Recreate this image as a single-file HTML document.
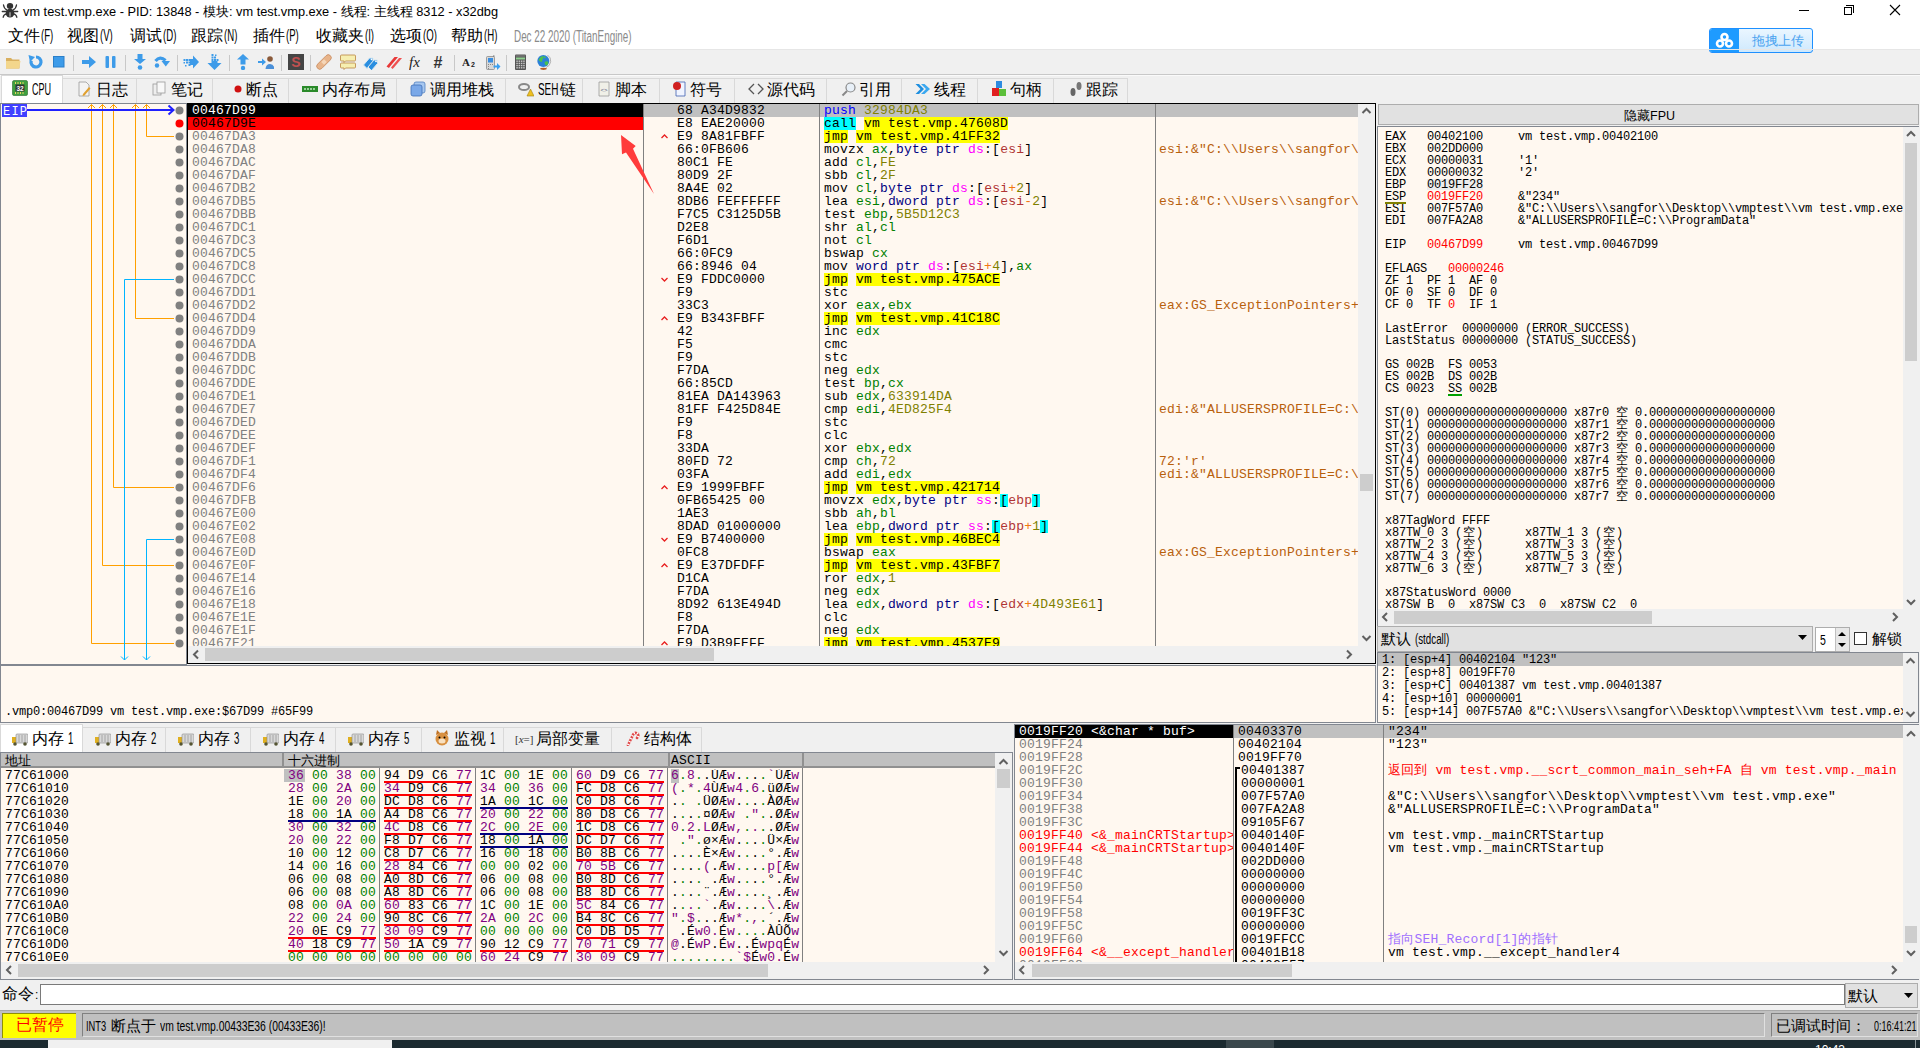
<!DOCTYPE html><html><head><meta charset="utf-8"><style>
*{margin:0;padding:0;box-sizing:border-box}
html,body{width:1920px;height:1048px;overflow:hidden;background:#f0f0f0;font-family:"Liberation Sans",sans-serif}
.a{position:absolute}
.m{position:absolute;font-family:"Liberation Mono",monospace;white-space:pre}
.m13{font-size:13px;letter-spacing:0.2px;line-height:13px;height:13px}
.m12{font-size:12px;letter-spacing:-0.2px;line-height:12px;height:12px}
.m12b{font-size:12px;letter-spacing:-0.2px;line-height:13px;height:13px}
.ui{position:absolute;white-space:pre;font-family:"Liberation Sans",sans-serif;color:#000}
.sb{position:absolute;background:#f0f0f0}
.th{position:absolute;background:#cdcdcd}
</style></head><body>

<div class="a" style="left:0;top:0;width:1920px;height:50px;background:#fff"></div>
<svg class="a" style="left:0;top:0" width="20" height="20" viewBox="0 0 20 20">
<g fill="#333"><ellipse cx="10" cy="6" rx="3.2" ry="2.9"/><ellipse cx="10" cy="13.2" rx="4.3" ry="4.4"/></g>
<rect x="9.3" y="11" width="1.4" height="5.6" fill="#aaa"/>
<g stroke="#333" stroke-width="1.3" fill="none" stroke-linecap="round"><path d="M3.5 5 Q4 8.5 6.8 9.8 M16.5 5 Q16 8.5 13.2 9.8 M2.3 11.5 H17.7 M3.2 17.3 Q3.5 14.5 6.5 13.8 M16.8 17.3 Q16.5 14.5 13.5 13.8"/></g></svg>
<div class="ui" style="left:23px;top:4px;font-size:12.8px;line-height:16px;color:#000">vm test.vmp.exe - PID: 13848 - 模块: vm test.vmp.exe - 线程: 主线程 8312 - x32dbg</div>
<div class="a" style="left:1799px;top:10px;width:10px;height:1px;background:#000"></div>
<div class="a" style="left:1844px;top:7px;width:8px;height:8px;border:1px solid #000"></div>
<div class="a" style="left:1846px;top:5px;width:8px;height:8px;border-top:1px solid #000;border-right:1px solid #000"></div>
<svg class="a" style="left:1889px;top:4px" width="12" height="12"><path d="M1 1 L11 11 M11 1 L1 11" stroke="#000" stroke-width="1.1"/></svg>
<div class="ui" style="left:8px;top:26px;font-size:16px;line-height:19px">文件<span style="display:inline-block;transform:scaleX(0.6);transform-origin:0 50%;margin-left:1px">(F)</span></div>
<div class="ui" style="left:67px;top:26px;font-size:16px;line-height:19px">视图<span style="display:inline-block;transform:scaleX(0.6);transform-origin:0 50%;margin-left:1px">(V)</span></div>
<div class="ui" style="left:130px;top:26px;font-size:16px;line-height:19px">调试<span style="display:inline-block;transform:scaleX(0.6);transform-origin:0 50%;margin-left:1px">(D)</span></div>
<div class="ui" style="left:191px;top:26px;font-size:16px;line-height:19px">跟踪<span style="display:inline-block;transform:scaleX(0.6);transform-origin:0 50%;margin-left:1px">(N)</span></div>
<div class="ui" style="left:253px;top:26px;font-size:16px;line-height:19px">插件<span style="display:inline-block;transform:scaleX(0.6);transform-origin:0 50%;margin-left:1px">(P)</span></div>
<div class="ui" style="left:316px;top:26px;font-size:16px;line-height:19px">收藏夹<span style="display:inline-block;transform:scaleX(0.6);transform-origin:0 50%;margin-left:1px">(I)</span></div>
<div class="ui" style="left:390px;top:26px;font-size:16px;line-height:19px">选项<span style="display:inline-block;transform:scaleX(0.6);transform-origin:0 50%;margin-left:1px">(O)</span></div>
<div class="ui" style="left:451px;top:26px;font-size:16px;line-height:19px">帮助<span style="display:inline-block;transform:scaleX(0.6);transform-origin:0 50%;margin-left:1px">(H)</span></div>
<div class="ui" style="left:514px;top:27px;font-size:16px;line-height:19px;color:#8a8a8a;transform:scaleX(0.617);transform-origin:0 0">Dec 22 2020 (TitanEngine)</div>
<div class="a" style="left:1709px;top:28px;width:104px;height:25px;border:1px solid #1e90ff;border-radius:3px;background:linear-gradient(#eaf6ff,#cfe9fd);overflow:hidden"><div class="a" style="left:-1px;top:-1px;width:30px;height:25px;background:#1e9bff;border-radius:3px 0 0 3px"></div><svg class="a" style="left:5px;top:3px" width="19" height="17" viewBox="0 0 19 17"><g fill="none" stroke="#fff" stroke-width="2.6"><circle cx="9.5" cy="5" r="3"/><circle cx="5" cy="11.5" r="3"/><circle cx="14" cy="11.5" r="3"/></g></svg><div class="ui" style="left:42px;top:3px;font-size:13px;line-height:17px;color:#4aa3f0">拖拽上传</div></div>
<div class="a" style="left:0;top:49px;width:1920px;height:1px;background:#e6e6e6"></div>
<div class="a" style="left:0;top:74px;width:1920px;height:1px;background:#c8c8c8"></div>
<div class="a" style="left:0;top:75px;width:1920px;height:1px;background:#fafafa"></div>
<div class="a" style="left:73px;top:55px;width:1px;height:16px;background:#c8c8c8"></div>
<div class="a" style="left:125px;top:55px;width:1px;height:16px;background:#c8c8c8"></div>
<div class="a" style="left:177px;top:55px;width:1px;height:16px;background:#c8c8c8"></div>
<div class="a" style="left:229px;top:55px;width:1px;height:16px;background:#c8c8c8"></div>
<div class="a" style="left:281px;top:55px;width:1px;height:16px;background:#c8c8c8"></div>
<div class="a" style="left:310px;top:55px;width:1px;height:16px;background:#c8c8c8"></div>
<div class="a" style="left:454px;top:55px;width:1px;height:16px;background:#c8c8c8"></div>
<div class="a" style="left:506px;top:55px;width:1px;height:16px;background:#c8c8c8"></div>
<svg class="a" style="left:5px;top:54px" width="16" height="16" viewBox="0 0 16 16"><path d="M1 4 h5 l1.5 1.5 h7 v9 h-13.5z" fill="#d9b060"/><path d="M1 7 h14.5 l-1.5 7.5 h-13z" fill="#f3d68c"/></svg>
<svg class="a" style="left:28px;top:54px" width="16" height="16" viewBox="0 0 16 16"><path d="M8 3 a5 5 0 1 1 -4.8 3.6" fill="none" stroke="#3d9be9" stroke-width="3.2"/><path d="M0.5 1 l6.5 2 l-5 5z" fill="#3d9be9"/></svg>
<svg class="a" style="left:50px;top:54px" width="16" height="16" viewBox="0 0 16 16"><rect x="3.5" y="2.5" width="10.5" height="10.5" fill="#3d9be9" stroke="#2a7fc9"/></svg>
<svg class="a" style="left:81px;top:54px" width="16" height="16" viewBox="0 0 16 16"><path d="M1 6 h7 v-4 l7 6 l-7 6 v-4 h-7z" fill="#3d9be9"/></svg>
<svg class="a" style="left:103px;top:54px" width="16" height="16" viewBox="0 0 16 16"><rect x="2.5" y="2" width="3.5" height="12" rx="1" fill="#3d9be9"/><rect x="9" y="2" width="3.5" height="12" rx="1" fill="#3d9be9"/></svg>
<svg class="a" style="left:132px;top:54px" width="16" height="16" viewBox="0 0 16 16"><path d="M5.5 0 h5 v5 h3.5 l-6 5 l-6 -5 h3.5z" fill="#3d9be9"/><circle cx="8" cy="13.5" r="2.3" fill="#3d9be9"/></svg>
<svg class="a" style="left:154px;top:54px" width="16" height="16" viewBox="0 0 16 16"><path d="M1.5 7 Q6 1.5 11.5 6.5" fill="none" stroke="#3d9be9" stroke-width="3.2"/><path d="M7.5 7 H16 L11.8 12.5z" fill="#3d9be9"/><circle cx="3" cy="11.5" r="2.2" fill="#3d9be9"/></svg>
<svg class="a" style="left:183px;top:54px" width="16" height="16" viewBox="0 0 16 16"><path d="M7 5 h3 v-3.5 l6 6.5 l-6 6.5 v-3.5 h-3z" fill="#3d9be9"/><g fill="#3d9be9"><rect x="0.5" y="5" width="2" height="2"/><rect x="3" y="5" width="2" height="2"/><rect x="5.5" y="5" width="2" height="2"/><rect x="3" y="7.5" width="2" height="2"/><rect x="5.5" y="7.5" width="2" height="2"/><rect x="0.5" y="8" width="1.5" height="1.5"/><rect x="5.5" y="10" width="2" height="2"/><rect x="2" y="11" width="1.5" height="1.5"/></g></svg>
<svg class="a" style="left:207px;top:54px" width="16" height="16" viewBox="0 0 16 16"><path d="M4.5 7 v2 h-4 l7 7 l7 -7 h-4 v-2z" fill="#3d9be9"/><g fill="#3d9be9"><rect x="4.5" y="0" width="2" height="2"/><rect x="4.5" y="2.5" width="2" height="2"/><rect x="7" y="2.5" width="2" height="2"/><rect x="4.5" y="5" width="2" height="2"/><rect x="7" y="5" width="2" height="2"/><rect x="9.5" y="5" width="2" height="2"/><rect x="8" y="0.5" width="1.5" height="1.5"/></g></svg>
<svg class="a" style="left:235px;top:54px" width="16" height="16" viewBox="0 0 16 16"><path d="M8 0 l6 5.5 h-3.5 v5 h-5 v-5 h-3.5z" fill="#3d9be9"/><circle cx="8" cy="14" r="2.2" fill="#3d9be9"/></svg>
<svg class="a" style="left:258px;top:54px" width="16" height="16" viewBox="0 0 16 16"><path d="M0 7 h4 v-2.5 l4 3.5 l-4 3.5 v-2.5 h-4z" fill="#3d9be9"/><circle cx="12" cy="5" r="2.8" fill="#8a5a3a"/><path d="M7.5 15 q0.5 -5 4.5 -5 q4 0 4.5 5z" fill="#4a90d9"/></svg>
<svg class="a" style="left:288px;top:54px" width="16" height="16" viewBox="0 0 16 16"><rect x="0" y="0" width="16" height="16" fill="#454545"/><text x="8" y="13" font-size="14" font-weight="bold" fill="#c05050" text-anchor="middle" font-family="Liberation Sans">S</text></svg>
<svg class="a" style="left:316px;top:54px" width="16" height="16" viewBox="0 0 16 16"><rect x="-1" y="5" width="18" height="6" rx="3" transform="rotate(-45 8 8)" fill="#e8b48a" stroke="#c98d62" stroke-width="0.8"/><rect x="6" y="6" width="4" height="4" transform="rotate(-45 8 8)" fill="#f5d6b8"/></svg>
<svg class="a" style="left:340px;top:54px" width="16" height="16" viewBox="0 0 16 16"><path d="M1.5 1 h13 a1 1 0 0 1 1 1 v4 a1 1 0 0 1 -1 1 h-9 l-1.5 1.5 v-1.5 h-2.5 a1 1 0 0 1 -1 -1 v-4 a1 1 0 0 1 1 -1z" fill="#f6eeb0" stroke="#c09050" stroke-width="0.9"/><path d="M1.5 9 h13 a1 1 0 0 1 1 1 v3 a1 1 0 0 1 -1 1 h-9 l-1.5 1.5 v-1.5 h-2.5 a1 1 0 0 1 -1 -1 v-3 a1 1 0 0 1 1 -1z" fill="#f6eeb0" stroke="#c09050" stroke-width="0.9"/></svg>
<svg class="a" style="left:363px;top:54px" width="16" height="16" viewBox="0 0 16 16"><path d="M0.5 11 l6 -7 h3.5 v3.5 l-6 7z" fill="#2a8ee0" stroke="#d8e8f0" stroke-width="1"/><path d="M5 13 l6 -7 h3.5 v3.5 l-6 7z" fill="#2a8ee0" stroke="#d8e8f0" stroke-width="1"/><circle cx="8.5" cy="5.3" r="0.9" fill="#fff"/><circle cx="13" cy="7.3" r="0.9" fill="#fff"/></svg>
<svg class="a" style="left:386px;top:54px" width="16" height="16" viewBox="0 0 16 16"><path d="M0.5 12.5 l8 -9.5 h3.5 l-8 9.5 l-1 1.5z" fill="#e83838"/><path d="M5 13.5 l8 -9.5 h3 l-8 9.5 l-1.5 1.5z" fill="#f05050"/></svg>
<svg class="a" style="left:409px;top:54px" width="16" height="16" viewBox="0 0 16 16"><text x="0" y="12.5" font-size="15" font-style="italic" font-family="Liberation Serif" fill="#222">fx</text></svg>
<svg class="a" style="left:433px;top:54px" width="16" height="16" viewBox="0 0 16 16"><text x="0.5" y="13.5" font-size="16" font-weight="bold" font-family="Liberation Sans" fill="#333">#</text></svg>
<svg class="a" style="left:462px;top:54px" width="16" height="16" viewBox="0 0 16 16"><text x="0" y="12" font-size="11" font-weight="bold" font-family="Liberation Serif" fill="#222">A</text><text x="9" y="13" font-size="7" font-weight="bold" font-family="Liberation Sans" fill="#222">2</text></svg>
<svg class="a" style="left:485px;top:54px" width="16" height="16" viewBox="0 0 16 16"><rect x="1.5" y="2.5" width="8" height="13" rx="1" fill="#d8d8d8" stroke="#8a8a8a" stroke-width="0.8"/><rect x="3" y="4" width="5" height="4.5" fill="#3a8ee0"/><g fill="#888"><rect x="3" y="10" width="1" height="1"/><rect x="5" y="10" width="1" height="1"/><rect x="7" y="10" width="1" height="1"/><rect x="3" y="12" width="1" height="1"/><rect x="3" y="14" width="1" height="1"/></g><rect x="8.6" y="1" width="0.6" height="2" fill="#555"/><path d="M8.5 11.5 h3.5 v-2.5 l3.5 3.5 l-3.5 3.5 v-2.5 h-3.5z" fill="#3aa0f0"/></svg>
<svg class="a" style="left:514px;top:54px" width="16" height="16" viewBox="0 0 16 16"><rect x="1" y="0.5" width="11" height="15.5" rx="1" fill="#555"/><rect x="2" y="1.5" width="9" height="1" fill="#888"/><rect x="2" y="3.5" width="9" height="2" fill="#8fd08f"/><g fill="#c8c8c8"><rect x="2.3" y="6.5" width="1.5" height="1.4"/><rect x="4.6" y="6.5" width="1.5" height="1.4"/><rect x="6.9" y="6.5" width="1.5" height="1.4"/><rect x="9.2" y="6.5" width="1.5" height="1.4"/><rect x="2.3" y="8.7" width="1.5" height="1.4"/><rect x="4.6" y="8.7" width="1.5" height="1.4"/><rect x="6.9" y="8.7" width="1.5" height="1.4"/><rect x="9.2" y="8.7" width="1.5" height="1.4"/><rect x="2.3" y="10.9" width="1.5" height="1.4"/><rect x="4.6" y="10.9" width="1.5" height="1.4"/><rect x="6.9" y="10.9" width="1.5" height="1.4"/><rect x="9.2" y="10.9" width="1.5" height="1.4"/><rect x="2.3" y="13.1" width="1.5" height="1.4"/><rect x="4.6" y="13.1" width="1.5" height="1.4"/><rect x="6.9" y="13.1" width="1.5" height="1.4"/><rect x="9.2" y="13.1" width="1.5" height="1.4"/></g></svg>
<svg class="a" style="left:536px;top:54px" width="16" height="16" viewBox="0 0 16 16"><circle cx="7.3" cy="7" r="6" fill="#2a80d8"/><path d="M2.5 6 q1.5 -3.5 4 -4 q1.5 1 0.5 3 q-1 1 -1 3 q-2 0 -3.5 -2z M8.5 8 q2.5 -1.5 4 0.5 q-0.5 2.5 -2.5 3 q-1.5 -1.5 -1.5 -3.5z M7 2 q2 0 3 1.5 l-1.5 1z" fill="#4cc04c"/><path d="M11.5 1 a7 7 0 0 1 -1.5 12.5" fill="none" stroke="#aaa" stroke-width="0.9"/><ellipse cx="7.5" cy="14.8" rx="3.3" ry="1.1" fill="#b8602a"/></svg>
<div class="a" style="left:1px;top:75px;width:62px;height:29px;background:#fff;border:1px solid #d9d9d9;border-bottom:none"></div>
<svg class="a" style="left:12px;top:80px" width="16" height="16" viewBox="0 0 16 16"><rect x="0.5" y="0.5" width="15" height="15" rx="1.5" fill="#3fa03f" stroke="#2a6a2a" stroke-width="0.6"/><g fill="#e8d060"><rect x="3" y="2" width="1" height="2"/><rect x="5.5" y="2" width="1" height="2"/><rect x="8" y="2" width="1" height="2"/><rect x="10.5" y="2" width="1" height="2"/><rect x="3" y="12" width="1" height="2"/><rect x="5.5" y="12" width="1" height="2"/><rect x="8" y="12" width="1" height="2"/><rect x="10.5" y="12" width="1" height="2"/></g><rect x="3.5" y="4.5" width="9" height="7" fill="#333"/><text x="8" y="10.6" font-size="6.5" font-weight="bold" fill="#fff" text-anchor="middle" font-family="Liberation Sans">32</text></svg>
<div class="ui" style="left:32px;top:81px;font-size:16.5px;line-height:17px;transform:scaleX(0.55);transform-origin:0 0">CPU</div>
<div class="a" style="left:63px;top:78px;width:74px;height:25px;background:#f0f0f0;border:1px solid #d9d9d9;border-bottom:none;border-left:none"></div>
<svg class="a" style="left:76px;top:81px" width="16" height="16" viewBox="0 0 16 16"><path d="M3 1 h7 l3 3 v11 h-10z" fill="#f4f4f4" stroke="#999" stroke-width="0.8"/><path d="M7 13 l6 -7 l1.5 1.5 l-6 7 l-2 0.5z" fill="#e0a030"/></svg>
<div class="ui" style="left:96px;top:80px;font-size:16px;line-height:19px">日志</div>
<div class="a" style="left:137px;top:78px;width:76px;height:25px;background:#f0f0f0;border:1px solid #d9d9d9;border-bottom:none;border-left:none"></div>
<svg class="a" style="left:151px;top:81px" width="16" height="16" viewBox="0 0 16 16"><rect x="2" y="3" width="8" height="11" fill="#eee" stroke="#999" stroke-width="0.8"/><rect x="6" y="1" width="8" height="11" fill="#f8f8f8" stroke="#999" stroke-width="0.8"/></svg>
<div class="ui" style="left:171px;top:80px;font-size:16px;line-height:19px">笔记</div>
<div class="a" style="left:213px;top:78px;width:76px;height:25px;background:#f0f0f0;border:1px solid #d9d9d9;border-bottom:none;border-left:none"></div>
<svg class="a" style="left:230px;top:81px" width="16" height="16" viewBox="0 0 16 16"><circle cx="8" cy="8" r="3.5" fill="#d01010"/></svg>
<div class="ui" style="left:246px;top:80px;font-size:16px;line-height:19px">断点</div>
<div class="a" style="left:289px;top:78px;width:108px;height:25px;background:#f0f0f0;border:1px solid #d9d9d9;border-bottom:none;border-left:none"></div>
<svg class="a" style="left:302px;top:81px" width="16" height="16" viewBox="0 0 16 16"><rect x="0" y="5" width="16" height="6" fill="#2a8a2a"/><g fill="#9ad09a"><rect x="2" y="7" width="2" height="2"/><rect x="5" y="7" width="2" height="2"/><rect x="8" y="7" width="2" height="2"/><rect x="11" y="7" width="2" height="2"/></g></svg>
<div class="ui" style="left:322px;top:80px;font-size:16px;line-height:19px">内存布局</div>
<div class="a" style="left:397px;top:78px;width:109px;height:25px;background:#f0f0f0;border:1px solid #d9d9d9;border-bottom:none;border-left:none"></div>
<svg class="a" style="left:410px;top:81px" width="16" height="16" viewBox="0 0 16 16"><rect x="4" y="1" width="11" height="11" rx="2" fill="#a8c8f0" stroke="#5080c0" stroke-width="0.8"/><rect x="1" y="4" width="11" height="11" rx="2" fill="#7aa8e8" stroke="#4070b8" stroke-width="0.8"/></svg>
<div class="ui" style="left:430px;top:80px;font-size:16px;line-height:19px">调用堆栈</div>
<div class="a" style="left:506px;top:78px;width:77px;height:25px;background:#f0f0f0;border:1px solid #d9d9d9;border-bottom:none;border-left:none"></div>
<svg class="a" style="left:518px;top:81px" width="16" height="16" viewBox="0 0 16 16"><ellipse cx="6" cy="6" rx="5" ry="3" fill="none" stroke="#888" stroke-width="2"/><path d="M9 15 l3.5 -7 l3.5 7z" fill="#f0c020" stroke="#a08010" stroke-width="0.6"/></svg>
<div class="ui" style="left:538px;top:80px;font-size:16px;line-height:19px"><span style="display:inline-block;transform:scaleX(0.62);transform-origin:0 50%;margin-right:-11px">SEH</span>链</div>
<div class="a" style="left:583px;top:78px;width:77px;height:25px;background:#f0f0f0;border:1px solid #d9d9d9;border-bottom:none;border-left:none"></div>
<svg class="a" style="left:596px;top:81px" width="16" height="16" viewBox="0 0 16 16"><path d="M3 1 h10 v14 h-10z" fill="#f0f0e8" stroke="#999" stroke-width="0.8"/><text x="8" y="11" font-size="6" fill="#557" text-anchor="middle" font-family="Liberation Sans">&lt;&gt;</text></svg>
<div class="ui" style="left:615px;top:80px;font-size:16px;line-height:19px">脚本</div>
<div class="a" style="left:660px;top:78px;width:75px;height:25px;background:#f0f0f0;border:1px solid #d9d9d9;border-bottom:none;border-left:none"></div>
<svg class="a" style="left:672px;top:81px" width="16" height="16" viewBox="0 0 16 16"><path d="M4 1 h9 v14 h-9z" fill="#f0f4ff" stroke="#4060b0" stroke-width="0.8"/><circle cx="5" cy="5" r="4" fill="#d02020"/></svg>
<div class="ui" style="left:690px;top:80px;font-size:16px;line-height:19px">符号</div>
<div class="a" style="left:735px;top:78px;width:92px;height:25px;background:#f0f0f0;border:1px solid #d9d9d9;border-bottom:none;border-left:none"></div>
<svg class="a" style="left:748px;top:81px" width="16" height="16" viewBox="0 0 16 16"><path d="M6 3 l-5 5 l5 5 M10 3 l5 5 l-5 5" fill="none" stroke="#555" stroke-width="1.3"/></svg>
<div class="ui" style="left:767px;top:80px;font-size:16px;line-height:19px">源代码</div>
<div class="a" style="left:827px;top:78px;width:75px;height:25px;background:#f0f0f0;border:1px solid #d9d9d9;border-bottom:none;border-left:none"></div>
<svg class="a" style="left:841px;top:81px" width="16" height="16" viewBox="0 0 16 16"><circle cx="9.5" cy="6.5" r="4.5" fill="#e8f0f8" stroke="#888" stroke-width="1.2"/><path d="M6 10 l-4.5 4.5" stroke="#888" stroke-width="2"/></svg>
<div class="ui" style="left:859px;top:80px;font-size:16px;line-height:19px">引用</div>
<div class="a" style="left:902px;top:78px;width:76px;height:25px;background:#f0f0f0;border:1px solid #d9d9d9;border-bottom:none;border-left:none"></div>
<svg class="a" style="left:915px;top:81px" width="16" height="16" viewBox="0 0 16 16"><path d="M0.5 3 h3.5 l5 5 l-5 5 h-3.5 l5 -5z" fill="#1e8fe0"/><path d="M6 3 h3.5 l5.5 5 l-5.5 5 h-3.5 l5 -5z" fill="#3aa8f0"/></svg>
<div class="ui" style="left:934px;top:80px;font-size:16px;line-height:19px">线程</div>
<div class="a" style="left:978px;top:78px;width:76px;height:25px;background:#f0f0f0;border:1px solid #d9d9d9;border-bottom:none;border-left:none"></div>
<svg class="a" style="left:991px;top:81px" width="16" height="16" viewBox="0 0 16 16"><rect x="5" y="0" width="6" height="7" fill="#2d8be0"/><rect x="1" y="7" width="7" height="8" fill="#e02020"/><rect x="8" y="8" width="7" height="7" fill="#5cbf3a"/></svg>
<div class="ui" style="left:1010px;top:80px;font-size:16px;line-height:19px">句柄</div>
<div class="a" style="left:1054px;top:78px;width:74px;height:25px;background:#f0f0f0;border:1px solid #d9d9d9;border-bottom:none;border-left:none"></div>
<svg class="a" style="left:1068px;top:81px" width="16" height="16" viewBox="0 0 16 16"><ellipse cx="5" cy="11" rx="2.5" ry="4" fill="#666"/><ellipse cx="11" cy="5" rx="2.5" ry="4" fill="#777"/></svg>
<div class="ui" style="left:1086px;top:80px;font-size:16px;line-height:19px">跟踪</div>
<div class="a" style="left:0;top:103px;width:187px;height:562px;background:#fff8f0;border-left:1px solid #828790;border-top:1px solid #828790;border-right:1px solid #828790;border-bottom:1px solid #828790"></div>
<div class="a" style="left:187px;top:103px;width:1189px;height:561px;background:#fff8f0;border:1px solid #000"></div>
<div class="a" style="left:188px;top:104px;width:1170px;height:542px;overflow:hidden">
<div class="a" style="left:455px;top:0;width:715px;height:13px;background:#c0c0c0"></div>
<div class="a" style="left:0;top:0;width:455px;height:13px;background:#000"></div>
<div class="a" style="left:0;top:13px;width:455px;height:13px;background:#ff0000"></div>
<div class="a" style="left:455px;top:0;width:1px;height:542px;background:#808080"></div>
<div class="a" style="left:631px;top:0;width:1px;height:542px;background:#808080"></div>
<div class="a" style="left:967px;top:0;width:1px;height:542px;background:#808080"></div>
<div class="m m13" style="left:4px;top:0px;color:#ffffff">00467D99</div>
<div class="m m13" style="left:489px;top:0px;color:#000">68 A34D9832</div>
<div class="m m13" style="left:636px;top:0px"><span style="color:#0000ff">push</span><span style="color:#000000"> </span><span style="color:#808000">32984DA3</span></div>
<div class="m m13" style="left:4px;top:13px;color:#000000">00467D9E</div>
<div class="m m13" style="left:489px;top:13px;color:#000">E8 EAE20000</div>
<div class="m m13" style="left:636px;top:13px"><span style="color:#000000;background:#00ffff;display:inline-block;height:13px;line-height:13px;vertical-align:top">call</span><span style="color:#000000"> </span><span style="color:#000000;background:#ffff00;display:inline-block;height:13px;line-height:13px;vertical-align:top">vm test.vmp.47608D</span></div>
<div class="m m13" style="left:4px;top:26px;color:#808080">00467DA3</div>
<div class="m m13" style="left:489px;top:26px;color:#000">E9 8A81FBFF</div>
<div class="m m13" style="left:636px;top:26px"><span style="color:#000000;background:#ffff00;display:inline-block;height:13px;line-height:13px;vertical-align:top">jmp</span><span style="color:#000000"> </span><span style="color:#000000;background:#ffff00;display:inline-block;height:13px;line-height:13px;vertical-align:top">vm test.vmp.41FF32</span></div>
<div class="m m13" style="left:4px;top:39px;color:#808080">00467DA8</div>
<div class="m m13" style="left:489px;top:39px;color:#000">66:0FB606</div>
<div class="m m13" style="left:636px;top:39px"><span style="color:#000000">movzx </span><span style="color:#008000">ax</span><span style="color:#000000">,</span><span style="color:#000080">byte ptr</span><span style="color:#000000"> </span><span style="color:#ff00ff">ds</span><span style="color:#000000">:</span><span style="color:#000000">[</span><span style="color:#b03434">esi</span><span style="color:#000000">]</span></div>
<div class="m m13" style="left:971px;top:39px;color:#b8600c;width:199px;overflow:hidden">esi:&amp;"C:\\Users\\sangfor\</div>
<div class="m m13" style="left:4px;top:52px;color:#808080">00467DAC</div>
<div class="m m13" style="left:489px;top:52px;color:#000">80C1 FE</div>
<div class="m m13" style="left:636px;top:52px"><span style="color:#000000">add </span><span style="color:#008000">cl</span><span style="color:#000000">,</span><span style="color:#808000">FE</span></div>
<div class="m m13" style="left:4px;top:65px;color:#808080">00467DAF</div>
<div class="m m13" style="left:489px;top:65px;color:#000">80D9 2F</div>
<div class="m m13" style="left:636px;top:65px"><span style="color:#000000">sbb </span><span style="color:#008000">cl</span><span style="color:#000000">,</span><span style="color:#808000">2F</span></div>
<div class="m m13" style="left:4px;top:78px;color:#808080">00467DB2</div>
<div class="m m13" style="left:489px;top:78px;color:#000">8A4E 02</div>
<div class="m m13" style="left:636px;top:78px"><span style="color:#000000">mov </span><span style="color:#008000">cl</span><span style="color:#000000">,</span><span style="color:#000080">byte ptr</span><span style="color:#000000"> </span><span style="color:#ff00ff">ds</span><span style="color:#000000">:</span><span style="color:#000000">[</span><span style="color:#b03434">esi</span><span style="color:#f27711">+</span><span style="color:#808000">2</span><span style="color:#000000">]</span></div>
<div class="m m13" style="left:4px;top:91px;color:#808080">00467DB5</div>
<div class="m m13" style="left:489px;top:91px;color:#000">8DB6 FEFFFFFF</div>
<div class="m m13" style="left:636px;top:91px"><span style="color:#000000">lea </span><span style="color:#008000">esi</span><span style="color:#000000">,</span><span style="color:#000080">dword ptr</span><span style="color:#000000"> </span><span style="color:#ff00ff">ds</span><span style="color:#000000">:</span><span style="color:#000000">[</span><span style="color:#b03434">esi</span><span style="color:#f27711">-</span><span style="color:#808000">2</span><span style="color:#000000">]</span></div>
<div class="m m13" style="left:971px;top:91px;color:#b8600c;width:199px;overflow:hidden">esi:&amp;"C:\\Users\\sangfor\</div>
<div class="m m13" style="left:4px;top:104px;color:#808080">00467DBB</div>
<div class="m m13" style="left:489px;top:104px;color:#000">F7C5 C3125D5B</div>
<div class="m m13" style="left:636px;top:104px"><span style="color:#000000">test </span><span style="color:#008000">ebp</span><span style="color:#000000">,</span><span style="color:#808000">5B5D12C3</span></div>
<div class="m m13" style="left:4px;top:117px;color:#808080">00467DC1</div>
<div class="m m13" style="left:489px;top:117px;color:#000">D2E8</div>
<div class="m m13" style="left:636px;top:117px"><span style="color:#000000">shr </span><span style="color:#008000">al</span><span style="color:#000000">,</span><span style="color:#008000">cl</span></div>
<div class="m m13" style="left:4px;top:130px;color:#808080">00467DC3</div>
<div class="m m13" style="left:489px;top:130px;color:#000">F6D1</div>
<div class="m m13" style="left:636px;top:130px"><span style="color:#000000">not </span><span style="color:#008000">cl</span></div>
<div class="m m13" style="left:4px;top:143px;color:#808080">00467DC5</div>
<div class="m m13" style="left:489px;top:143px;color:#000">66:0FC9</div>
<div class="m m13" style="left:636px;top:143px"><span style="color:#000000">bswap </span><span style="color:#008000">cx</span></div>
<div class="m m13" style="left:4px;top:156px;color:#808080">00467DC8</div>
<div class="m m13" style="left:489px;top:156px;color:#000">66:8946 04</div>
<div class="m m13" style="left:636px;top:156px"><span style="color:#000000">mov </span><span style="color:#000080">word ptr</span><span style="color:#000000"> </span><span style="color:#ff00ff">ds</span><span style="color:#000000">:</span><span style="color:#000000">[</span><span style="color:#b03434">esi</span><span style="color:#f27711">+</span><span style="color:#808000">4</span><span style="color:#000000">]</span><span style="color:#000000">,</span><span style="color:#008000">ax</span></div>
<div class="m m13" style="left:4px;top:169px;color:#808080">00467DCC</div>
<div class="m m13" style="left:489px;top:169px;color:#000">E9 FDDC0000</div>
<div class="m m13" style="left:636px;top:169px"><span style="color:#000000;background:#ffff00;display:inline-block;height:13px;line-height:13px;vertical-align:top">jmp</span><span style="color:#000000"> </span><span style="color:#000000;background:#ffff00;display:inline-block;height:13px;line-height:13px;vertical-align:top">vm test.vmp.475ACE</span></div>
<div class="m m13" style="left:4px;top:182px;color:#808080">00467DD1</div>
<div class="m m13" style="left:489px;top:182px;color:#000">F9</div>
<div class="m m13" style="left:636px;top:182px"><span style="color:#000000">stc</span></div>
<div class="m m13" style="left:4px;top:195px;color:#808080">00467DD2</div>
<div class="m m13" style="left:489px;top:195px;color:#000">33C3</div>
<div class="m m13" style="left:636px;top:195px"><span style="color:#000000">xor </span><span style="color:#008000">eax</span><span style="color:#000000">,</span><span style="color:#008000">ebx</span></div>
<div class="m m13" style="left:971px;top:195px;color:#b8600c;width:199px;overflow:hidden">eax:GS_ExceptionPointers+</div>
<div class="m m13" style="left:4px;top:208px;color:#808080">00467DD4</div>
<div class="m m13" style="left:489px;top:208px;color:#000">E9 B343FBFF</div>
<div class="m m13" style="left:636px;top:208px"><span style="color:#000000;background:#ffff00;display:inline-block;height:13px;line-height:13px;vertical-align:top">jmp</span><span style="color:#000000"> </span><span style="color:#000000;background:#ffff00;display:inline-block;height:13px;line-height:13px;vertical-align:top">vm test.vmp.41C18C</span></div>
<div class="m m13" style="left:4px;top:221px;color:#808080">00467DD9</div>
<div class="m m13" style="left:489px;top:221px;color:#000">42</div>
<div class="m m13" style="left:636px;top:221px"><span style="color:#000000">inc </span><span style="color:#008000">edx</span></div>
<div class="m m13" style="left:4px;top:234px;color:#808080">00467DDA</div>
<div class="m m13" style="left:489px;top:234px;color:#000">F5</div>
<div class="m m13" style="left:636px;top:234px"><span style="color:#000000">cmc</span></div>
<div class="m m13" style="left:4px;top:247px;color:#808080">00467DDB</div>
<div class="m m13" style="left:489px;top:247px;color:#000">F9</div>
<div class="m m13" style="left:636px;top:247px"><span style="color:#000000">stc</span></div>
<div class="m m13" style="left:4px;top:260px;color:#808080">00467DDC</div>
<div class="m m13" style="left:489px;top:260px;color:#000">F7DA</div>
<div class="m m13" style="left:636px;top:260px"><span style="color:#000000">neg </span><span style="color:#008000">edx</span></div>
<div class="m m13" style="left:4px;top:273px;color:#808080">00467DDE</div>
<div class="m m13" style="left:489px;top:273px;color:#000">66:85CD</div>
<div class="m m13" style="left:636px;top:273px"><span style="color:#000000">test </span><span style="color:#008000">bp</span><span style="color:#000000">,</span><span style="color:#008000">cx</span></div>
<div class="m m13" style="left:4px;top:286px;color:#808080">00467DE1</div>
<div class="m m13" style="left:489px;top:286px;color:#000">81EA DA143963</div>
<div class="m m13" style="left:636px;top:286px"><span style="color:#000000">sub </span><span style="color:#008000">edx</span><span style="color:#000000">,</span><span style="color:#808000">633914DA</span></div>
<div class="m m13" style="left:4px;top:299px;color:#808080">00467DE7</div>
<div class="m m13" style="left:489px;top:299px;color:#000">81FF F425D84E</div>
<div class="m m13" style="left:636px;top:299px"><span style="color:#000000">cmp </span><span style="color:#008000">edi</span><span style="color:#000000">,</span><span style="color:#808000">4ED825F4</span></div>
<div class="m m13" style="left:971px;top:299px;color:#b8600c;width:199px;overflow:hidden">edi:&amp;"ALLUSERSPROFILE=C:\</div>
<div class="m m13" style="left:4px;top:312px;color:#808080">00467DED</div>
<div class="m m13" style="left:489px;top:312px;color:#000">F9</div>
<div class="m m13" style="left:636px;top:312px"><span style="color:#000000">stc</span></div>
<div class="m m13" style="left:4px;top:325px;color:#808080">00467DEE</div>
<div class="m m13" style="left:489px;top:325px;color:#000">F8</div>
<div class="m m13" style="left:636px;top:325px"><span style="color:#000000">clc</span></div>
<div class="m m13" style="left:4px;top:338px;color:#808080">00467DEF</div>
<div class="m m13" style="left:489px;top:338px;color:#000">33DA</div>
<div class="m m13" style="left:636px;top:338px"><span style="color:#000000">xor </span><span style="color:#008000">ebx</span><span style="color:#000000">,</span><span style="color:#008000">edx</span></div>
<div class="m m13" style="left:4px;top:351px;color:#808080">00467DF1</div>
<div class="m m13" style="left:489px;top:351px;color:#000">80FD 72</div>
<div class="m m13" style="left:636px;top:351px"><span style="color:#000000">cmp </span><span style="color:#008000">ch</span><span style="color:#000000">,</span><span style="color:#808000">72</span></div>
<div class="m m13" style="left:971px;top:351px;color:#b8600c;width:199px;overflow:hidden">72:'r'</div>
<div class="m m13" style="left:4px;top:364px;color:#808080">00467DF4</div>
<div class="m m13" style="left:489px;top:364px;color:#000">03FA</div>
<div class="m m13" style="left:636px;top:364px"><span style="color:#000000">add </span><span style="color:#008000">edi</span><span style="color:#000000">,</span><span style="color:#008000">edx</span></div>
<div class="m m13" style="left:971px;top:364px;color:#b8600c;width:199px;overflow:hidden">edi:&amp;"ALLUSERSPROFILE=C:\</div>
<div class="m m13" style="left:4px;top:377px;color:#808080">00467DF6</div>
<div class="m m13" style="left:489px;top:377px;color:#000">E9 1999FBFF</div>
<div class="m m13" style="left:636px;top:377px"><span style="color:#000000;background:#ffff00;display:inline-block;height:13px;line-height:13px;vertical-align:top">jmp</span><span style="color:#000000"> </span><span style="color:#000000;background:#ffff00;display:inline-block;height:13px;line-height:13px;vertical-align:top">vm test.vmp.421714</span></div>
<div class="m m13" style="left:4px;top:390px;color:#808080">00467DFB</div>
<div class="m m13" style="left:489px;top:390px;color:#000">0FB65425 00</div>
<div class="m m13" style="left:636px;top:390px"><span style="color:#000000">movzx </span><span style="color:#008000">edx</span><span style="color:#000000">,</span><span style="color:#000080">byte ptr</span><span style="color:#000000"> </span><span style="color:#ff00ff">ss</span><span style="color:#000000">:</span><span style="color:#000000;background:#00ffff;display:inline-block;height:13px;line-height:13px;vertical-align:top">[</span><span style="color:#b03434">ebp</span><span style="color:#000000;background:#00ffff;display:inline-block;height:13px;line-height:13px;vertical-align:top">]</span></div>
<div class="m m13" style="left:4px;top:403px;color:#808080">00467E00</div>
<div class="m m13" style="left:489px;top:403px;color:#000">1AE3</div>
<div class="m m13" style="left:636px;top:403px"><span style="color:#000000">sbb </span><span style="color:#008000">ah</span><span style="color:#000000">,</span><span style="color:#008000">bl</span></div>
<div class="m m13" style="left:4px;top:416px;color:#808080">00467E02</div>
<div class="m m13" style="left:489px;top:416px;color:#000">8DAD 01000000</div>
<div class="m m13" style="left:636px;top:416px"><span style="color:#000000">lea </span><span style="color:#008000">ebp</span><span style="color:#000000">,</span><span style="color:#000080">dword ptr</span><span style="color:#000000"> </span><span style="color:#ff00ff">ss</span><span style="color:#000000">:</span><span style="color:#000000;background:#00ffff;display:inline-block;height:13px;line-height:13px;vertical-align:top">[</span><span style="color:#b03434">ebp</span><span style="color:#f27711">+</span><span style="color:#808000">1</span><span style="color:#000000;background:#00ffff;display:inline-block;height:13px;line-height:13px;vertical-align:top">]</span></div>
<div class="m m13" style="left:4px;top:429px;color:#808080">00467E08</div>
<div class="m m13" style="left:489px;top:429px;color:#000">E9 B7400000</div>
<div class="m m13" style="left:636px;top:429px"><span style="color:#000000;background:#ffff00;display:inline-block;height:13px;line-height:13px;vertical-align:top">jmp</span><span style="color:#000000"> </span><span style="color:#000000;background:#ffff00;display:inline-block;height:13px;line-height:13px;vertical-align:top">vm test.vmp.46BEC4</span></div>
<div class="m m13" style="left:4px;top:442px;color:#808080">00467E0D</div>
<div class="m m13" style="left:489px;top:442px;color:#000">0FC8</div>
<div class="m m13" style="left:636px;top:442px"><span style="color:#000000">bswap </span><span style="color:#008000">eax</span></div>
<div class="m m13" style="left:971px;top:442px;color:#b8600c;width:199px;overflow:hidden">eax:GS_ExceptionPointers+</div>
<div class="m m13" style="left:4px;top:455px;color:#808080">00467E0F</div>
<div class="m m13" style="left:489px;top:455px;color:#000">E9 E37DFDFF</div>
<div class="m m13" style="left:636px;top:455px"><span style="color:#000000;background:#ffff00;display:inline-block;height:13px;line-height:13px;vertical-align:top">jmp</span><span style="color:#000000"> </span><span style="color:#000000;background:#ffff00;display:inline-block;height:13px;line-height:13px;vertical-align:top">vm test.vmp.43FBF7</span></div>
<div class="m m13" style="left:4px;top:468px;color:#808080">00467E14</div>
<div class="m m13" style="left:489px;top:468px;color:#000">D1CA</div>
<div class="m m13" style="left:636px;top:468px"><span style="color:#000000">ror </span><span style="color:#008000">edx</span><span style="color:#000000">,</span><span style="color:#808000">1</span></div>
<div class="m m13" style="left:4px;top:481px;color:#808080">00467E16</div>
<div class="m m13" style="left:489px;top:481px;color:#000">F7DA</div>
<div class="m m13" style="left:636px;top:481px"><span style="color:#000000">neg </span><span style="color:#008000">edx</span></div>
<div class="m m13" style="left:4px;top:494px;color:#808080">00467E18</div>
<div class="m m13" style="left:489px;top:494px;color:#000">8D92 613E494D</div>
<div class="m m13" style="left:636px;top:494px"><span style="color:#000000">lea </span><span style="color:#008000">edx</span><span style="color:#000000">,</span><span style="color:#000080">dword ptr</span><span style="color:#000000"> </span><span style="color:#ff00ff">ds</span><span style="color:#000000">:</span><span style="color:#000000">[</span><span style="color:#b03434">edx</span><span style="color:#f27711">+</span><span style="color:#808000">4D493E61</span><span style="color:#000000">]</span></div>
<div class="m m13" style="left:4px;top:507px;color:#808080">00467E1E</div>
<div class="m m13" style="left:489px;top:507px;color:#000">F8</div>
<div class="m m13" style="left:636px;top:507px"><span style="color:#000000">clc</span></div>
<div class="m m13" style="left:4px;top:520px;color:#808080">00467E1F</div>
<div class="m m13" style="left:489px;top:520px;color:#000">F7DA</div>
<div class="m m13" style="left:636px;top:520px"><span style="color:#000000">neg </span><span style="color:#008000">edx</span></div>
<div class="m m13" style="left:4px;top:533px;color:#808080">00467E21</div>
<div class="m m13" style="left:489px;top:533px;color:#000">E9 D3B9FEFF</div>
<div class="m m13" style="left:636px;top:533px"><span style="color:#000000;background:#ffff00;display:inline-block;height:13px;line-height:13px;vertical-align:top">jmp</span><span style="color:#000000"> </span><span style="color:#000000;background:#ffff00;display:inline-block;height:13px;line-height:13px;vertical-align:top">vm test.vmp.4537E9</span></div>
</div>
<div class="sb" style="left:1358px;top:104px;width:17px;height:542px"></div>
<div class="th" style="left:1360px;top:474px;width:13px;height:17px"></div>
<div class="sb" style="left:188px;top:646px;width:1187px;height:17px"></div>
<div class="th" style="left:205px;top:648px;width:509px;height:13px"></div>
<svg class="a" style="left:0;top:0" width="190" height="670"><path d="M91.5 643.5 V104.5 M88.0 108 L91.5 104.5 L95.0 108" fill="none" stroke="#ffa000" stroke-width="1"/><path d="M91.5 643.5 H174" fill="none" stroke="#ffa000" stroke-width="1"/><path d="M102.5 565.5 V104.5 M99.0 108 L102.5 104.5 L106.0 108" fill="none" stroke="#ffa000" stroke-width="1"/><path d="M102.5 565.5 H174" fill="none" stroke="#ffa000" stroke-width="1"/><path d="M113.5 487.5 V104.5 M110.0 108 L113.5 104.5 L117.0 108" fill="none" stroke="#ffa000" stroke-width="1"/><path d="M113.5 487.5 H174" fill="none" stroke="#ffa000" stroke-width="1"/><path d="M135.5 318.5 V104.5 M132.0 108 L135.5 104.5 L139.0 108" fill="none" stroke="#ffa000" stroke-width="1"/><path d="M135.5 318.5 H174" fill="none" stroke="#ffa000" stroke-width="1"/><path d="M146.5 136.5 V104.5 M143.0 108 L146.5 104.5 L150.0 108" fill="none" stroke="#ffa000" stroke-width="1"/><path d="M146.5 136.5 H174" fill="none" stroke="#ffa000" stroke-width="1"/><path d="M174 279.5 H124.5 V660 M121.0 656.5 L124.5 660 L128.0 656.5" fill="none" stroke="#00b4ff" stroke-width="1"/><path d="M174 539.5 H146.5 V660 M143.0 656.5 L146.5 660 L150.0 656.5" fill="none" stroke="#00b4ff" stroke-width="1"/><rect x="2" y="104" width="25" height="13" fill="#4040ff"/><path d="M27 110 H173" stroke="#2020ff" stroke-width="2"/><path d="M168.5 105.5 L173.5 110 L168.5 114.5" fill="none" stroke="#2020ff" stroke-width="2"/><circle cx="179.5" cy="110.5" r="4" fill="#808080"/><circle cx="179.5" cy="123.5" r="4" fill="#ff0000"/><circle cx="179.5" cy="136.5" r="4" fill="#808080"/><circle cx="179.5" cy="149.5" r="4" fill="#808080"/><circle cx="179.5" cy="162.5" r="4" fill="#808080"/><circle cx="179.5" cy="175.5" r="4" fill="#808080"/><circle cx="179.5" cy="188.5" r="4" fill="#808080"/><circle cx="179.5" cy="201.5" r="4" fill="#808080"/><circle cx="179.5" cy="214.5" r="4" fill="#808080"/><circle cx="179.5" cy="227.5" r="4" fill="#808080"/><circle cx="179.5" cy="240.5" r="4" fill="#808080"/><circle cx="179.5" cy="253.5" r="4" fill="#808080"/><circle cx="179.5" cy="266.5" r="4" fill="#808080"/><circle cx="179.5" cy="279.5" r="4" fill="#808080"/><circle cx="179.5" cy="292.5" r="4" fill="#808080"/><circle cx="179.5" cy="305.5" r="4" fill="#808080"/><circle cx="179.5" cy="318.5" r="4" fill="#808080"/><circle cx="179.5" cy="331.5" r="4" fill="#808080"/><circle cx="179.5" cy="344.5" r="4" fill="#808080"/><circle cx="179.5" cy="357.5" r="4" fill="#808080"/><circle cx="179.5" cy="370.5" r="4" fill="#808080"/><circle cx="179.5" cy="383.5" r="4" fill="#808080"/><circle cx="179.5" cy="396.5" r="4" fill="#808080"/><circle cx="179.5" cy="409.5" r="4" fill="#808080"/><circle cx="179.5" cy="422.5" r="4" fill="#808080"/><circle cx="179.5" cy="435.5" r="4" fill="#808080"/><circle cx="179.5" cy="448.5" r="4" fill="#808080"/><circle cx="179.5" cy="461.5" r="4" fill="#808080"/><circle cx="179.5" cy="474.5" r="4" fill="#808080"/><circle cx="179.5" cy="487.5" r="4" fill="#808080"/><circle cx="179.5" cy="500.5" r="4" fill="#808080"/><circle cx="179.5" cy="513.5" r="4" fill="#808080"/><circle cx="179.5" cy="526.5" r="4" fill="#808080"/><circle cx="179.5" cy="539.5" r="4" fill="#808080"/><circle cx="179.5" cy="552.5" r="4" fill="#808080"/><circle cx="179.5" cy="565.5" r="4" fill="#808080"/><circle cx="179.5" cy="578.5" r="4" fill="#808080"/><circle cx="179.5" cy="591.5" r="4" fill="#808080"/><circle cx="179.5" cy="604.5" r="4" fill="#808080"/><circle cx="179.5" cy="617.5" r="4" fill="#808080"/><circle cx="179.5" cy="630.5" r="4" fill="#808080"/><circle cx="179.5" cy="643.5" r="4" fill="#808080"/></svg>
<div class="m m13" style="left:3px;top:106px;color:#fff;font-size:12px;letter-spacing:1.2px">EIP</div>
<div class="a" style="left:0;top:665px;width:1376px;height:58px;background:#fff8f0;border:1px solid #828790"></div>
<div class="m m12b" style="left:5px;top:706px;color:#000">.vmp0:00467D99 vm test.vmp.exe:$67D99 #65F99</div>
<div class="a" style="left:1378px;top:104px;width:541px;height:21px;background:#e1e1e1;border:1px solid #adadad"></div>
<div class="ui" style="left:1624px;top:107px;font-size:12.5px;line-height:18px">隐藏FPU</div>
<div class="a" style="left:1377px;top:126px;width:542px;height:500px;background:#fff8f0;border-left:1px solid #828790;border-top:1px solid #828790"></div>
<div class="sb" style="left:1903px;top:127px;width:16px;height:482px"></div>
<div class="th" style="left:1905px;top:143px;width:12px;height:218px"></div>
<div class="sb" style="left:1378px;top:609px;width:541px;height:17px"></div>
<div class="th" style="left:1394px;top:611px;width:258px;height:13px"></div>
<div class="a" style="left:1427px;top:179px;width:56px;height:11px;background:#ececec"></div>
<div class="m m12" style="left:1385px;top:131px;color:#000"><span style="color:#000">EAX   00402100     vm test.vmp.00402100</span></div>
<div class="m m12" style="left:1385px;top:143px;color:#000"><span style="color:#000">EBX   002DD000</span></div>
<div class="m m12" style="left:1385px;top:155px;color:#000"><span style="color:#000">ECX   00000031     '1'</span></div>
<div class="m m12" style="left:1385px;top:167px;color:#000"><span style="color:#000">EDX   00000032     '2'</span></div>
<div class="m m12" style="left:1385px;top:179px;color:#000"><span style="color:#000">EBP   0019FF28</span></div>
<div class="m m12" style="left:1385px;top:191px;color:#000"><span style="color:#000">ESP   </span><span style="color:#ff0000">0019FF20</span><span style="color:#000">     &amp;"234"</span></div>
<div class="m m12" style="left:1385px;top:203px;color:#000"><span style="color:#000">ESI   007F57A0     &amp;"C:\\Users\\sangfor\\Desktop\\vmptest\\vm test.vmp.exe</span></div>
<div class="m m12" style="left:1385px;top:215px;color:#000"><span style="color:#000">EDI   007FA2A8     &amp;"ALLUSERSPROFILE=C:\\ProgramData"</span></div>
<div class="m m12" style="left:1385px;top:239px;color:#000"><span style="color:#000">EIP   </span><span style="color:#ff0000">00467D99</span><span style="color:#000">     vm test.vmp.00467D99</span></div>
<div class="m m12" style="left:1385px;top:263px;color:#000"><span style="color:#000">EFLAGS   </span><span style="color:#ff0000">00000246</span></div>
<div class="m m12" style="left:1385px;top:275px;color:#000"><span style="color:#000">ZF 1  PF 1  AF 0</span></div>
<div class="m m12" style="left:1385px;top:287px;color:#000"><span style="color:#000">OF 0  SF 0  DF 0</span></div>
<div class="m m12" style="left:1385px;top:299px;color:#000"><span style="color:#000">CF 0  TF </span><span style="color:#ff0000">0</span><span style="color:#000">  IF 1</span></div>
<div class="m m12" style="left:1385px;top:323px;color:#000"><span style="color:#000">LastError  00000000 (ERROR_SUCCESS)</span></div>
<div class="m m12" style="left:1385px;top:335px;color:#000"><span style="color:#000">LastStatus 00000000 (STATUS_SUCCESS)</span></div>
<div class="m m12" style="left:1385px;top:359px;color:#000"><span style="color:#000">GS 002B  FS 0053</span></div>
<div class="m m12" style="left:1385px;top:371px;color:#000"><span style="color:#000">ES 002B  DS 002B</span></div>
<div class="m m12" style="left:1385px;top:383px;color:#000"><span style="color:#000">CS 0023  SS 002B</span></div>
<div class="m m12" style="left:1385px;top:407px;color:#000"><span style="color:#000">ST(0) 00000000000000000000 x87r0 </span><span style="color:#000"><span style="display:inline-block;width:12px;text-align:center;letter-spacing:0">空</span></span><span style="color:#000"> 0.000000000000000000</span></div>
<div class="m m12" style="left:1385px;top:419px;color:#000"><span style="color:#000">ST(1) 00000000000000000000 x87r1 </span><span style="color:#000"><span style="display:inline-block;width:12px;text-align:center;letter-spacing:0">空</span></span><span style="color:#000"> 0.000000000000000000</span></div>
<div class="m m12" style="left:1385px;top:431px;color:#000"><span style="color:#000">ST(2) 00000000000000000000 x87r2 </span><span style="color:#000"><span style="display:inline-block;width:12px;text-align:center;letter-spacing:0">空</span></span><span style="color:#000"> 0.000000000000000000</span></div>
<div class="m m12" style="left:1385px;top:443px;color:#000"><span style="color:#000">ST(3) 00000000000000000000 x87r3 </span><span style="color:#000"><span style="display:inline-block;width:12px;text-align:center;letter-spacing:0">空</span></span><span style="color:#000"> 0.000000000000000000</span></div>
<div class="m m12" style="left:1385px;top:455px;color:#000"><span style="color:#000">ST(4) 00000000000000000000 x87r4 </span><span style="color:#000"><span style="display:inline-block;width:12px;text-align:center;letter-spacing:0">空</span></span><span style="color:#000"> 0.000000000000000000</span></div>
<div class="m m12" style="left:1385px;top:467px;color:#000"><span style="color:#000">ST(5) 00000000000000000000 x87r5 </span><span style="color:#000"><span style="display:inline-block;width:12px;text-align:center;letter-spacing:0">空</span></span><span style="color:#000"> 0.000000000000000000</span></div>
<div class="m m12" style="left:1385px;top:479px;color:#000"><span style="color:#000">ST(6) 00000000000000000000 x87r6 </span><span style="color:#000"><span style="display:inline-block;width:12px;text-align:center;letter-spacing:0">空</span></span><span style="color:#000"> 0.000000000000000000</span></div>
<div class="m m12" style="left:1385px;top:491px;color:#000"><span style="color:#000">ST(7) 00000000000000000000 x87r7 </span><span style="color:#000"><span style="display:inline-block;width:12px;text-align:center;letter-spacing:0">空</span></span><span style="color:#000"> 0.000000000000000000</span></div>
<div class="m m12" style="left:1385px;top:515px;color:#000"><span style="color:#000">x87TagWord FFFF</span></div>
<div class="m m12" style="left:1385px;top:527px;color:#000"><span style="color:#000">x87TW_0 3 (<span style="display:inline-block;width:14px;text-align:center;letter-spacing:0">空</span>)      x87TW_1 3 (<span style="display:inline-block;width:14px;text-align:center;letter-spacing:0">空</span>)</span></div>
<div class="m m12" style="left:1385px;top:539px;color:#000"><span style="color:#000">x87TW_2 3 (<span style="display:inline-block;width:14px;text-align:center;letter-spacing:0">空</span>)      x87TW_3 3 (<span style="display:inline-block;width:14px;text-align:center;letter-spacing:0">空</span>)</span></div>
<div class="m m12" style="left:1385px;top:551px;color:#000"><span style="color:#000">x87TW_4 3 (<span style="display:inline-block;width:14px;text-align:center;letter-spacing:0">空</span>)      x87TW_5 3 (<span style="display:inline-block;width:14px;text-align:center;letter-spacing:0">空</span>)</span></div>
<div class="m m12" style="left:1385px;top:563px;color:#000"><span style="color:#000">x87TW_6 3 (<span style="display:inline-block;width:14px;text-align:center;letter-spacing:0">空</span>)      x87TW_7 3 (<span style="display:inline-block;width:14px;text-align:center;letter-spacing:0">空</span>)</span></div>
<div class="m m12" style="left:1385px;top:587px;color:#000"><span style="color:#000">x87StatusWord 0000</span></div>
<div class="m m12" style="left:1385px;top:599px;color:#000"><span style="color:#000">x87SW_B  0  x87SW_C3  0  x87SW_C2  0</span></div>
<div class="sb" style="left:1378px;top:609px;width:541px;height:17px"></div>
<div class="th" style="left:1394px;top:611px;width:258px;height:13px"></div>
<div class="a" style="left:1385px;top:202px;width:21px;height:2px;background:#808000"></div>
<div class="a" style="left:1448px;top:394px;width:14px;height:2px;background:#00a000"></div>
<div class="a" style="left:1377px;top:626px;width:436px;height:26px;background:#e1e1e1;border:1px solid #adadad"></div>
<div class="ui" style="left:1381px;top:629px;font-size:15px;line-height:19px">默认 <span style="display:inline-block;transform:scaleX(0.65);transform-origin:0 50%">(stdcall)</span></div>
<svg class="a" style="left:1798px;top:635px" width="10" height="6"><path d="M0 0 H9 L4.5 5z" fill="#000"/></svg>
<div class="a" style="left:1815px;top:627px;width:35px;height:25px;background:#fff;border:1px solid #adadad"></div>
<div class="ui" style="left:1820px;top:630px;font-size:15px;line-height:19px;transform:scaleX(0.7);transform-origin:0 0">5</div>
<div class="a" style="left:1835px;top:628px;width:14px;height:23px;background:#e8e8e8;border-left:1px solid #c0c0c0"></div>
<svg class="a" style="left:1838px;top:632px" width="8" height="16"><path d="M0 4 L4 0 L8 4z M0 11 H8 L4 15z" fill="#000"/></svg>
<div class="a" style="left:1854px;top:632px;width:13px;height:13px;background:#fff;border:1px solid #333"></div>
<div class="ui" style="left:1872px;top:629px;font-size:15px;line-height:19px">解锁</div>
<div class="a" style="left:1377px;top:652px;width:542px;height:71px;background:#fff8f0;border:1px solid #828790"></div>
<div class="a" style="left:1378px;top:653px;width:525px;height:13px;background:#c0c0c0"></div>
<div class="sb" style="left:1903px;top:653px;width:15px;height:69px"></div>
<div class="m m12b" style="left:1382px;top:654px;color:#000;width:521px;overflow:hidden">1: [esp+4] 00402104 "123"</div>
<div class="m m12b" style="left:1382px;top:667px;color:#000;width:521px;overflow:hidden">2: [esp+8] 0019FF70</div>
<div class="m m12b" style="left:1382px;top:680px;color:#000;width:521px;overflow:hidden">3: [esp+C] 00401387 vm test.vmp.00401387</div>
<div class="m m12b" style="left:1382px;top:693px;color:#000;width:521px;overflow:hidden">4: [esp+10] 00000001</div>
<div class="m m12b" style="left:1382px;top:706px;color:#000;width:521px;overflow:hidden">5: [esp+14] 007F57A0 &amp;"C:\\Users\\sangfor\\Desktop\\vmptest\\vm test.vmp.exe"</div>
<div class="a" style="left:0px;top:724px;width:83px;height:29px;background:#fff;border:1px solid #d9d9d9;border-bottom:none"></div>
<svg class="a" style="left:12px;top:731px" width="16" height="16" viewBox="0 0 16 16"><rect x="0" y="6" width="4" height="6" fill="#e0b020"/><rect x="4" y="3" width="12" height="9" rx="1" fill="#d8d8d8" stroke="#888" stroke-width="0.6"/><g stroke="#999" stroke-width="0.8"><path d="M7 4 V11 M10 4 V11 M13 4 V11"/></g><circle cx="3" cy="13" r="1.8" fill="#553"/><circle cx="13" cy="13" r="1.8" fill="#553"/></svg>
<div class="ui" style="left:32px;top:729px;font-size:16px;line-height:19px">内存<span style="display:inline-block;transform:scaleX(0.6);transform-origin:0 50%;margin-left:4px">1</span></div>
<div class="a" style="left:83px;top:727px;width:83px;height:26px;background:#f0f0f0;border:1px solid #d9d9d9;border-bottom:none;border-left:none"></div>
<svg class="a" style="left:95px;top:731px" width="16" height="16" viewBox="0 0 16 16"><rect x="0" y="6" width="4" height="6" fill="#e0b020"/><rect x="4" y="3" width="12" height="9" rx="1" fill="#d8d8d8" stroke="#888" stroke-width="0.6"/><g stroke="#999" stroke-width="0.8"><path d="M7 4 V11 M10 4 V11 M13 4 V11"/></g><circle cx="3" cy="13" r="1.8" fill="#553"/><circle cx="13" cy="13" r="1.8" fill="#553"/></svg>
<div class="ui" style="left:115px;top:729px;font-size:16px;line-height:19px">内存<span style="display:inline-block;transform:scaleX(0.6);transform-origin:0 50%;margin-left:4px">2</span></div>
<div class="a" style="left:166px;top:727px;width:85px;height:26px;background:#f0f0f0;border:1px solid #d9d9d9;border-bottom:none;border-left:none"></div>
<svg class="a" style="left:178px;top:731px" width="16" height="16" viewBox="0 0 16 16"><rect x="0" y="6" width="4" height="6" fill="#e0b020"/><rect x="4" y="3" width="12" height="9" rx="1" fill="#d8d8d8" stroke="#888" stroke-width="0.6"/><g stroke="#999" stroke-width="0.8"><path d="M7 4 V11 M10 4 V11 M13 4 V11"/></g><circle cx="3" cy="13" r="1.8" fill="#553"/><circle cx="13" cy="13" r="1.8" fill="#553"/></svg>
<div class="ui" style="left:198px;top:729px;font-size:16px;line-height:19px">内存<span style="display:inline-block;transform:scaleX(0.6);transform-origin:0 50%;margin-left:4px">3</span></div>
<div class="a" style="left:251px;top:727px;width:85px;height:26px;background:#f0f0f0;border:1px solid #d9d9d9;border-bottom:none;border-left:none"></div>
<svg class="a" style="left:263px;top:731px" width="16" height="16" viewBox="0 0 16 16"><rect x="0" y="6" width="4" height="6" fill="#e0b020"/><rect x="4" y="3" width="12" height="9" rx="1" fill="#d8d8d8" stroke="#888" stroke-width="0.6"/><g stroke="#999" stroke-width="0.8"><path d="M7 4 V11 M10 4 V11 M13 4 V11"/></g><circle cx="3" cy="13" r="1.8" fill="#553"/><circle cx="13" cy="13" r="1.8" fill="#553"/></svg>
<div class="ui" style="left:283px;top:729px;font-size:16px;line-height:19px">内存<span style="display:inline-block;transform:scaleX(0.6);transform-origin:0 50%;margin-left:4px">4</span></div>
<div class="a" style="left:336px;top:727px;width:86px;height:26px;background:#f0f0f0;border:1px solid #d9d9d9;border-bottom:none;border-left:none"></div>
<svg class="a" style="left:348px;top:731px" width="16" height="16" viewBox="0 0 16 16"><rect x="0" y="6" width="4" height="6" fill="#e0b020"/><rect x="4" y="3" width="12" height="9" rx="1" fill="#d8d8d8" stroke="#888" stroke-width="0.6"/><g stroke="#999" stroke-width="0.8"><path d="M7 4 V11 M10 4 V11 M13 4 V11"/></g><circle cx="3" cy="13" r="1.8" fill="#553"/><circle cx="13" cy="13" r="1.8" fill="#553"/></svg>
<div class="ui" style="left:368px;top:729px;font-size:16px;line-height:19px">内存<span style="display:inline-block;transform:scaleX(0.6);transform-origin:0 50%;margin-left:4px">5</span></div>
<div class="a" style="left:422px;top:727px;width:82px;height:26px;background:#f0f0f0;border:1px solid #d9d9d9;border-bottom:none;border-left:none"></div>
<svg class="a" style="left:434px;top:730px" width="16" height="16" viewBox="0 0 16 16"><circle cx="8" cy="9" r="6.5" fill="#d89040"/><path d="M2 5 L3 0 L6 3z M14 5 L13 0 L10 3z" fill="#c07020"/><ellipse cx="8" cy="11" rx="3.5" ry="2.5" fill="#f8e0c0"/><circle cx="5.5" cy="7.5" r="1" fill="#000"/><circle cx="10.5" cy="7.5" r="1" fill="#000"/></svg>
<div class="ui" style="left:454px;top:729px;font-size:16px;line-height:19px">监视<span style="display:inline-block;transform:scaleX(0.6);transform-origin:0 50%;margin-left:4px">1</span></div>
<div class="a" style="left:504px;top:727px;width:108px;height:26px;background:#f0f0f0;border:1px solid #d9d9d9;border-bottom:none;border-left:none"></div>
<div class="ui" style="left:515px;top:733px;font-size:11px;line-height:12px;font-family:'Liberation Serif';color:#333">[<i>x</i>=]</div>
<div class="ui" style="left:536px;top:729px;font-size:16px;line-height:19px">局部变量</div>
<div class="a" style="left:612px;top:727px;width:90px;height:26px;background:#f0f0f0;border:1px solid #d9d9d9;border-bottom:none;border-left:none"></div>
<svg class="a" style="left:624px;top:730px" width="16" height="16" viewBox="0 0 16 16"><path d="M4 15 L9.5 4 a2.6 2.6 0 0 1 4.6 2.3 L13 8" fill="none" stroke="#e04848" stroke-width="2.6" stroke-linecap="round"/><path d="M4 15 L9.5 4 a2.6 2.6 0 0 1 4.6 2.3 L13 8" fill="none" stroke="#fff" stroke-width="2.6" stroke-dasharray="1.2 2"/></svg>
<div class="ui" style="left:644px;top:729px;font-size:16px;line-height:19px">结构体</div>
<div class="a" style="left:0;top:752px;width:1013px;height:228px;background:#fff8f0;border:1px solid #828790"></div>
<div class="a" style="left:1px;top:753px;width:994px;height:15px;background:#c0c0c0;border-bottom:2px solid #909090"></div>
<div class="a" style="left:282px;top:753px;width:2px;height:15px;background:#909090"></div>
<div class="a" style="left:668px;top:753px;width:2px;height:15px;background:#909090"></div>
<div class="a" style="left:802px;top:753px;width:2px;height:15px;background:#909090"></div>
<div class="ui" style="left:5px;top:753px;font-size:13px;line-height:15px">地址</div>
<div class="ui" style="left:288px;top:753px;font-size:13px;line-height:15px">十六进制</div>
<div class="m m12b" style="left:671px;top:754px;color:#000;font-size:13px;letter-spacing:0.2px">ASCII</div>
<div class="a" style="left:379px;top:768px;width:1px;height:194px;background:#808080"></div>
<div class="a" style="left:475px;top:768px;width:1px;height:194px;background:#808080"></div>
<div class="a" style="left:571px;top:768px;width:1px;height:194px;background:#808080"></div>
<div class="a" style="left:667px;top:768px;width:1px;height:194px;background:#808080"></div>
<div class="a" style="left:802px;top:768px;width:1px;height:194px;background:#808080"></div>
<div class="a" style="left:1px;top:769px;width:994px;height:193px;overflow:hidden">
<div class="a" style="left:283px;top:0;width:21px;height:13px;background:#c0c0c0"></div>
<div class="m m13" style="left:4px;top:0px;color:#000">77C61000</div>
<div class="m m13" style="left:287px;top:0px"><span style="color:#800080">36</span> <span style="color:#008000">00</span> <span style="color:#800080">38</span> <span style="color:#008000">00</span></div>
<div class="m m13" style="left:383px;top:0px"><span style="color:#000">94</span> <span style="color:#000">D9</span> <span style="color:#000">C6</span> <span style="color:#800080">77</span></div>
<div class="a" style="left:383px;top:12px;width:88px;height:2px;background:#ff0000"></div>
<div class="m m13" style="left:479px;top:0px"><span style="color:#000">1C</span> <span style="color:#008000">00</span> <span style="color:#000">1E</span> <span style="color:#008000">00</span></div>
<div class="m m13" style="left:575px;top:0px"><span style="color:#800080">60</span> <span style="color:#000">D9</span> <span style="color:#000">C6</span> <span style="color:#800080">77</span></div>
<div class="a" style="left:575px;top:12px;width:88px;height:2px;background:#ff0000"></div>
<div class="m m13" style="left:670px;top:0px"><span style="color:#800080;background:#c0c0c0">6</span><span style="color:#008000">.</span><span style="color:#800080">8</span><span style="color:#008000">.</span><span style="color:#000">.</span><span style="color:#000">Ù</span><span style="color:#000">Æ</span><span style="color:#800080">w</span><span style="color:#000">.</span><span style="color:#008000">.</span><span style="color:#000">.</span><span style="color:#008000">.</span><span style="color:#800080">`</span><span style="color:#000">Ù</span><span style="color:#000">Æ</span><span style="color:#800080">w</span></div>
<div class="m m13" style="left:4px;top:13px;color:#000">77C61010</div>
<div class="m m13" style="left:287px;top:13px"><span style="color:#800080">28</span> <span style="color:#008000">00</span> <span style="color:#800080">2A</span> <span style="color:#008000">00</span></div>
<div class="m m13" style="left:383px;top:13px"><span style="color:#800080">34</span> <span style="color:#000">D9</span> <span style="color:#000">C6</span> <span style="color:#800080">77</span></div>
<div class="a" style="left:383px;top:25px;width:88px;height:2px;background:#ff0000"></div>
<div class="m m13" style="left:479px;top:13px"><span style="color:#800080">34</span> <span style="color:#008000">00</span> <span style="color:#800080">36</span> <span style="color:#008000">00</span></div>
<div class="m m13" style="left:575px;top:13px"><span style="color:#000">FC</span> <span style="color:#000">D8</span> <span style="color:#000">C6</span> <span style="color:#800080">77</span></div>
<div class="a" style="left:575px;top:25px;width:88px;height:2px;background:#ff0000"></div>
<div class="m m13" style="left:670px;top:13px"><span style="color:#800080">(</span><span style="color:#008000">.</span><span style="color:#800080">*</span><span style="color:#008000">.</span><span style="color:#800080">4</span><span style="color:#000">Ù</span><span style="color:#000">Æ</span><span style="color:#800080">w</span><span style="color:#800080">4</span><span style="color:#008000">.</span><span style="color:#800080">6</span><span style="color:#008000">.</span><span style="color:#000">ü</span><span style="color:#000">Ø</span><span style="color:#000">Æ</span><span style="color:#800080">w</span></div>
<div class="m m13" style="left:4px;top:26px;color:#000">77C61020</div>
<div class="m m13" style="left:287px;top:26px"><span style="color:#000">1E</span> <span style="color:#008000">00</span> <span style="color:#800080">20</span> <span style="color:#008000">00</span></div>
<div class="m m13" style="left:383px;top:26px"><span style="color:#000">DC</span> <span style="color:#000">D8</span> <span style="color:#000">C6</span> <span style="color:#800080">77</span></div>
<div class="a" style="left:383px;top:38px;width:88px;height:2px;background:#ff0000"></div>
<div class="m m13" style="left:479px;top:26px"><span style="color:#000">1A</span> <span style="color:#008000">00</span> <span style="color:#000">1C</span> <span style="color:#008000">00</span></div>
<div class="a" style="left:479px;top:38px;width:88px;height:2px;background:#000080"></div>
<div class="m m13" style="left:575px;top:26px"><span style="color:#000">C0</span> <span style="color:#000">D8</span> <span style="color:#000">C6</span> <span style="color:#800080">77</span></div>
<div class="a" style="left:575px;top:38px;width:88px;height:2px;background:#ff0000"></div>
<div class="m m13" style="left:670px;top:26px"><span style="color:#000">.</span><span style="color:#008000">.</span><span style="color:#800080"> </span><span style="color:#008000">.</span><span style="color:#000">Ü</span><span style="color:#000">Ø</span><span style="color:#000">Æ</span><span style="color:#800080">w</span><span style="color:#000">.</span><span style="color:#008000">.</span><span style="color:#000">.</span><span style="color:#008000">.</span><span style="color:#000">À</span><span style="color:#000">Ø</span><span style="color:#000">Æ</span><span style="color:#800080">w</span></div>
<div class="m m13" style="left:4px;top:39px;color:#000">77C61030</div>
<div class="m m13" style="left:287px;top:39px"><span style="color:#000">18</span> <span style="color:#008000">00</span> <span style="color:#000">1A</span> <span style="color:#008000">00</span></div>
<div class="a" style="left:287px;top:51px;width:88px;height:2px;background:#000080"></div>
<div class="m m13" style="left:383px;top:39px"><span style="color:#000">A4</span> <span style="color:#000">D8</span> <span style="color:#000">C6</span> <span style="color:#800080">77</span></div>
<div class="a" style="left:383px;top:51px;width:88px;height:2px;background:#ff0000"></div>
<div class="m m13" style="left:479px;top:39px"><span style="color:#800080">20</span> <span style="color:#008000">00</span> <span style="color:#800080">22</span> <span style="color:#008000">00</span></div>
<div class="m m13" style="left:575px;top:39px"><span style="color:#000">80</span> <span style="color:#000">D8</span> <span style="color:#000">C6</span> <span style="color:#800080">77</span></div>
<div class="a" style="left:575px;top:51px;width:88px;height:2px;background:#ff0000"></div>
<div class="m m13" style="left:670px;top:39px"><span style="color:#000">.</span><span style="color:#008000">.</span><span style="color:#000">.</span><span style="color:#008000">.</span><span style="color:#000">¤</span><span style="color:#000">Ø</span><span style="color:#000">Æ</span><span style="color:#800080">w</span><span style="color:#800080"> </span><span style="color:#008000">.</span><span style="color:#800080">"</span><span style="color:#008000">.</span><span style="color:#000">.</span><span style="color:#000">Ø</span><span style="color:#000">Æ</span><span style="color:#800080">w</span></div>
<div class="m m13" style="left:4px;top:52px;color:#000">77C61040</div>
<div class="m m13" style="left:287px;top:52px"><span style="color:#800080">30</span> <span style="color:#008000">00</span> <span style="color:#800080">32</span> <span style="color:#008000">00</span></div>
<div class="m m13" style="left:383px;top:52px"><span style="color:#800080">4C</span> <span style="color:#000">D8</span> <span style="color:#000">C6</span> <span style="color:#800080">77</span></div>
<div class="a" style="left:383px;top:64px;width:88px;height:2px;background:#ff0000"></div>
<div class="m m13" style="left:479px;top:52px"><span style="color:#800080">2C</span> <span style="color:#008000">00</span> <span style="color:#800080">2E</span> <span style="color:#008000">00</span></div>
<div class="a" style="left:479px;top:64px;width:88px;height:2px;background:#000080"></div>
<div class="m m13" style="left:575px;top:52px"><span style="color:#000">1C</span> <span style="color:#000">D8</span> <span style="color:#000">C6</span> <span style="color:#800080">77</span></div>
<div class="a" style="left:575px;top:64px;width:88px;height:2px;background:#ff0000"></div>
<div class="m m13" style="left:670px;top:52px"><span style="color:#800080">0</span><span style="color:#008000">.</span><span style="color:#800080">2</span><span style="color:#008000">.</span><span style="color:#800080">L</span><span style="color:#000">Ø</span><span style="color:#000">Æ</span><span style="color:#800080">w</span><span style="color:#800080">,</span><span style="color:#008000">.</span><span style="color:#800080">.</span><span style="color:#008000">.</span><span style="color:#000">.</span><span style="color:#000">Ø</span><span style="color:#000">Æ</span><span style="color:#800080">w</span></div>
<div class="m m13" style="left:4px;top:65px;color:#000">77C61050</div>
<div class="m m13" style="left:287px;top:65px"><span style="color:#800080">20</span> <span style="color:#008000">00</span> <span style="color:#800080">22</span> <span style="color:#008000">00</span></div>
<div class="m m13" style="left:383px;top:65px"><span style="color:#000">F8</span> <span style="color:#000">D7</span> <span style="color:#000">C6</span> <span style="color:#800080">77</span></div>
<div class="a" style="left:383px;top:77px;width:88px;height:2px;background:#ff0000"></div>
<div class="m m13" style="left:479px;top:65px"><span style="color:#000">18</span> <span style="color:#008000">00</span> <span style="color:#000">1A</span> <span style="color:#008000">00</span></div>
<div class="a" style="left:479px;top:77px;width:88px;height:2px;background:#000080"></div>
<div class="m m13" style="left:575px;top:65px"><span style="color:#000">DC</span> <span style="color:#000">D7</span> <span style="color:#000">C6</span> <span style="color:#800080">77</span></div>
<div class="a" style="left:575px;top:77px;width:88px;height:2px;background:#ff0000"></div>
<div class="m m13" style="left:670px;top:65px"><span style="color:#800080"> </span><span style="color:#008000">.</span><span style="color:#800080">"</span><span style="color:#008000">.</span><span style="color:#000">ø</span><span style="color:#000">×</span><span style="color:#000">Æ</span><span style="color:#800080">w</span><span style="color:#000">.</span><span style="color:#008000">.</span><span style="color:#000">.</span><span style="color:#008000">.</span><span style="color:#000">Ü</span><span style="color:#000">×</span><span style="color:#000">Æ</span><span style="color:#800080">w</span></div>
<div class="m m13" style="left:4px;top:78px;color:#000">77C61060</div>
<div class="m m13" style="left:287px;top:78px"><span style="color:#000">10</span> <span style="color:#008000">00</span> <span style="color:#000">12</span> <span style="color:#008000">00</span></div>
<div class="m m13" style="left:383px;top:78px"><span style="color:#000">C8</span> <span style="color:#000">D7</span> <span style="color:#000">C6</span> <span style="color:#800080">77</span></div>
<div class="a" style="left:383px;top:90px;width:88px;height:2px;background:#ff0000"></div>
<div class="m m13" style="left:479px;top:78px"><span style="color:#000">16</span> <span style="color:#008000">00</span> <span style="color:#000">18</span> <span style="color:#008000">00</span></div>
<div class="m m13" style="left:575px;top:78px"><span style="color:#000">B0</span> <span style="color:#000">8B</span> <span style="color:#000">C6</span> <span style="color:#800080">77</span></div>
<div class="a" style="left:575px;top:90px;width:88px;height:2px;background:#ff0000"></div>
<div class="m m13" style="left:670px;top:78px"><span style="color:#000">.</span><span style="color:#008000">.</span><span style="color:#000">.</span><span style="color:#008000">.</span><span style="color:#000">È</span><span style="color:#000">×</span><span style="color:#000">Æ</span><span style="color:#800080">w</span><span style="color:#000">.</span><span style="color:#008000">.</span><span style="color:#000">.</span><span style="color:#008000">.</span><span style="color:#000">°</span><span style="color:#000">.</span><span style="color:#000">Æ</span><span style="color:#800080">w</span></div>
<div class="m m13" style="left:4px;top:91px;color:#000">77C61070</div>
<div class="m m13" style="left:287px;top:91px"><span style="color:#000">14</span> <span style="color:#008000">00</span> <span style="color:#000">16</span> <span style="color:#008000">00</span></div>
<div class="m m13" style="left:383px;top:91px"><span style="color:#800080">28</span> <span style="color:#000">84</span> <span style="color:#000">C6</span> <span style="color:#800080">77</span></div>
<div class="a" style="left:383px;top:103px;width:88px;height:2px;background:#ff0000"></div>
<div class="m m13" style="left:479px;top:91px"><span style="color:#008000">00</span> <span style="color:#008000">00</span> <span style="color:#000">02</span> <span style="color:#008000">00</span></div>
<div class="m m13" style="left:575px;top:91px"><span style="color:#800080">70</span> <span style="color:#800080">5B</span> <span style="color:#000">C6</span> <span style="color:#800080">77</span></div>
<div class="a" style="left:575px;top:103px;width:88px;height:2px;background:#ff0000"></div>
<div class="m m13" style="left:670px;top:91px"><span style="color:#000">.</span><span style="color:#008000">.</span><span style="color:#000">.</span><span style="color:#008000">.</span><span style="color:#800080">(</span><span style="color:#000">.</span><span style="color:#000">Æ</span><span style="color:#800080">w</span><span style="color:#008000">.</span><span style="color:#008000">.</span><span style="color:#000">.</span><span style="color:#008000">.</span><span style="color:#800080">p</span><span style="color:#800080">[</span><span style="color:#000">Æ</span><span style="color:#800080">w</span></div>
<div class="m m13" style="left:4px;top:104px;color:#000">77C61080</div>
<div class="m m13" style="left:287px;top:104px"><span style="color:#000">06</span> <span style="color:#008000">00</span> <span style="color:#000">08</span> <span style="color:#008000">00</span></div>
<div class="m m13" style="left:383px;top:104px"><span style="color:#000">A0</span> <span style="color:#000">8D</span> <span style="color:#000">C6</span> <span style="color:#800080">77</span></div>
<div class="a" style="left:383px;top:116px;width:88px;height:2px;background:#ff0000"></div>
<div class="m m13" style="left:479px;top:104px"><span style="color:#000">06</span> <span style="color:#008000">00</span> <span style="color:#000">08</span> <span style="color:#008000">00</span></div>
<div class="m m13" style="left:575px;top:104px"><span style="color:#000">B0</span> <span style="color:#000">8D</span> <span style="color:#000">C6</span> <span style="color:#800080">77</span></div>
<div class="a" style="left:575px;top:116px;width:88px;height:2px;background:#ff0000"></div>
<div class="m m13" style="left:670px;top:104px"><span style="color:#000">.</span><span style="color:#008000">.</span><span style="color:#000">.</span><span style="color:#008000">.</span><span style="color:#000"> </span><span style="color:#000">.</span><span style="color:#000">Æ</span><span style="color:#800080">w</span><span style="color:#000">.</span><span style="color:#008000">.</span><span style="color:#000">.</span><span style="color:#008000">.</span><span style="color:#000">°</span><span style="color:#000">.</span><span style="color:#000">Æ</span><span style="color:#800080">w</span></div>
<div class="m m13" style="left:4px;top:117px;color:#000">77C61090</div>
<div class="m m13" style="left:287px;top:117px"><span style="color:#000">06</span> <span style="color:#008000">00</span> <span style="color:#000">08</span> <span style="color:#008000">00</span></div>
<div class="m m13" style="left:383px;top:117px"><span style="color:#000">A8</span> <span style="color:#000">8D</span> <span style="color:#000">C6</span> <span style="color:#800080">77</span></div>
<div class="a" style="left:383px;top:129px;width:88px;height:2px;background:#ff0000"></div>
<div class="m m13" style="left:479px;top:117px"><span style="color:#000">06</span> <span style="color:#008000">00</span> <span style="color:#000">08</span> <span style="color:#008000">00</span></div>
<div class="m m13" style="left:575px;top:117px"><span style="color:#000">B8</span> <span style="color:#000">8D</span> <span style="color:#000">C6</span> <span style="color:#800080">77</span></div>
<div class="a" style="left:575px;top:129px;width:88px;height:2px;background:#ff0000"></div>
<div class="m m13" style="left:670px;top:117px"><span style="color:#000">.</span><span style="color:#008000">.</span><span style="color:#000">.</span><span style="color:#008000">.</span><span style="color:#000">¨</span><span style="color:#000">.</span><span style="color:#000">Æ</span><span style="color:#800080">w</span><span style="color:#000">.</span><span style="color:#008000">.</span><span style="color:#000">.</span><span style="color:#008000">.</span><span style="color:#000">¸</span><span style="color:#000">.</span><span style="color:#000">Æ</span><span style="color:#800080">w</span></div>
<div class="m m13" style="left:4px;top:130px;color:#000">77C610A0</div>
<div class="m m13" style="left:287px;top:130px"><span style="color:#000">08</span> <span style="color:#008000">00</span> <span style="color:#800080">0A</span> <span style="color:#008000">00</span></div>
<div class="m m13" style="left:383px;top:130px"><span style="color:#800080">60</span> <span style="color:#000">83</span> <span style="color:#000">C6</span> <span style="color:#800080">77</span></div>
<div class="a" style="left:383px;top:142px;width:88px;height:2px;background:#ff0000"></div>
<div class="m m13" style="left:479px;top:130px"><span style="color:#000">1C</span> <span style="color:#008000">00</span> <span style="color:#000">1E</span> <span style="color:#008000">00</span></div>
<div class="m m13" style="left:575px;top:130px"><span style="color:#800080">5C</span> <span style="color:#000">84</span> <span style="color:#000">C6</span> <span style="color:#800080">77</span></div>
<div class="a" style="left:575px;top:142px;width:88px;height:2px;background:#ff0000"></div>
<div class="m m13" style="left:670px;top:130px"><span style="color:#000">.</span><span style="color:#008000">.</span><span style="color:#800080">.</span><span style="color:#008000">.</span><span style="color:#800080">`</span><span style="color:#000">.</span><span style="color:#000">Æ</span><span style="color:#800080">w</span><span style="color:#000">.</span><span style="color:#008000">.</span><span style="color:#000">.</span><span style="color:#008000">.</span><span style="color:#800080">\</span><span style="color:#000">.</span><span style="color:#000">Æ</span><span style="color:#800080">w</span></div>
<div class="m m13" style="left:4px;top:143px;color:#000">77C610B0</div>
<div class="m m13" style="left:287px;top:143px"><span style="color:#800080">22</span> <span style="color:#008000">00</span> <span style="color:#800080">24</span> <span style="color:#008000">00</span></div>
<div class="m m13" style="left:383px;top:143px"><span style="color:#000">90</span> <span style="color:#000">8C</span> <span style="color:#000">C6</span> <span style="color:#800080">77</span></div>
<div class="a" style="left:383px;top:155px;width:88px;height:2px;background:#ff0000"></div>
<div class="m m13" style="left:479px;top:143px"><span style="color:#800080">2A</span> <span style="color:#008000">00</span> <span style="color:#800080">2C</span> <span style="color:#008000">00</span></div>
<div class="m m13" style="left:575px;top:143px"><span style="color:#000">B4</span> <span style="color:#000">8C</span> <span style="color:#000">C6</span> <span style="color:#800080">77</span></div>
<div class="a" style="left:575px;top:155px;width:88px;height:2px;background:#ff0000"></div>
<div class="m m13" style="left:670px;top:143px"><span style="color:#800080">"</span><span style="color:#008000">.</span><span style="color:#800080">$</span><span style="color:#008000">.</span><span style="color:#000">.</span><span style="color:#000">.</span><span style="color:#000">Æ</span><span style="color:#800080">w</span><span style="color:#800080">*</span><span style="color:#008000">.</span><span style="color:#800080">,</span><span style="color:#008000">.</span><span style="color:#000">´</span><span style="color:#000">.</span><span style="color:#000">Æ</span><span style="color:#800080">w</span></div>
<div class="m m13" style="left:4px;top:156px;color:#000">77C610C0</div>
<div class="m m13" style="left:287px;top:156px"><span style="color:#800080">20</span> <span style="color:#000">0E</span> <span style="color:#000">C9</span> <span style="color:#800080">77</span></div>
<div class="a" style="left:287px;top:168px;width:88px;height:2px;background:#ff0000"></div>
<div class="m m13" style="left:383px;top:156px"><span style="color:#800080">30</span> <span style="color:#800080">09</span> <span style="color:#000">C9</span> <span style="color:#800080">77</span></div>
<div class="a" style="left:383px;top:168px;width:88px;height:2px;background:#ff0000"></div>
<div class="m m13" style="left:479px;top:156px"><span style="color:#008000">00</span> <span style="color:#008000">00</span> <span style="color:#008000">00</span> <span style="color:#008000">00</span></div>
<div class="m m13" style="left:575px;top:156px"><span style="color:#000">C0</span> <span style="color:#000">DB</span> <span style="color:#000">D5</span> <span style="color:#800080">77</span></div>
<div class="a" style="left:575px;top:168px;width:88px;height:2px;background:#ff0000"></div>
<div class="m m13" style="left:670px;top:156px"><span style="color:#800080"> </span><span style="color:#000">.</span><span style="color:#000">É</span><span style="color:#800080">w</span><span style="color:#800080">0</span><span style="color:#800080">.</span><span style="color:#000">É</span><span style="color:#800080">w</span><span style="color:#008000">.</span><span style="color:#008000">.</span><span style="color:#008000">.</span><span style="color:#008000">.</span><span style="color:#000">À</span><span style="color:#000">Û</span><span style="color:#000">Õ</span><span style="color:#800080">w</span></div>
<div class="m m13" style="left:4px;top:169px;color:#000">77C610D0</div>
<div class="m m13" style="left:287px;top:169px"><span style="color:#800080">40</span> <span style="color:#000">18</span> <span style="color:#000">C9</span> <span style="color:#800080">77</span></div>
<div class="a" style="left:287px;top:181px;width:88px;height:2px;background:#ff0000"></div>
<div class="m m13" style="left:383px;top:169px"><span style="color:#800080">50</span> <span style="color:#000">1A</span> <span style="color:#000">C9</span> <span style="color:#800080">77</span></div>
<div class="a" style="left:383px;top:181px;width:88px;height:2px;background:#ff0000"></div>
<div class="m m13" style="left:479px;top:169px"><span style="color:#000">90</span> <span style="color:#000">12</span> <span style="color:#000">C9</span> <span style="color:#800080">77</span></div>
<div class="a" style="left:479px;top:181px;width:88px;height:2px;background:#ff0000"></div>
<div class="m m13" style="left:575px;top:169px"><span style="color:#800080">70</span> <span style="color:#800080">71</span> <span style="color:#000">C9</span> <span style="color:#800080">77</span></div>
<div class="a" style="left:575px;top:181px;width:88px;height:2px;background:#ff0000"></div>
<div class="m m13" style="left:670px;top:169px"><span style="color:#800080">@</span><span style="color:#000">.</span><span style="color:#000">É</span><span style="color:#800080">w</span><span style="color:#800080">P</span><span style="color:#000">.</span><span style="color:#000">É</span><span style="color:#800080">w</span><span style="color:#000">.</span><span style="color:#000">.</span><span style="color:#000">É</span><span style="color:#800080">w</span><span style="color:#800080">p</span><span style="color:#800080">q</span><span style="color:#000">É</span><span style="color:#800080">w</span></div>
<div class="m m13" style="left:4px;top:182px;color:#000">77C610E0</div>
<div class="m m13" style="left:287px;top:182px"><span style="color:#008000">00</span> <span style="color:#008000">00</span> <span style="color:#008000">00</span> <span style="color:#008000">00</span></div>
<div class="m m13" style="left:383px;top:182px"><span style="color:#008000">00</span> <span style="color:#008000">00</span> <span style="color:#008000">00</span> <span style="color:#008000">00</span></div>
<div class="m m13" style="left:479px;top:182px"><span style="color:#800080">60</span> <span style="color:#800080">24</span> <span style="color:#000">C9</span> <span style="color:#800080">77</span></div>
<div class="m m13" style="left:575px;top:182px"><span style="color:#800080">30</span> <span style="color:#800080">09</span> <span style="color:#000">C9</span> <span style="color:#800080">77</span></div>
<div class="m m13" style="left:670px;top:182px"><span style="color:#008000">.</span><span style="color:#008000">.</span><span style="color:#008000">.</span><span style="color:#008000">.</span><span style="color:#008000">.</span><span style="color:#008000">.</span><span style="color:#008000">.</span><span style="color:#008000">.</span><span style="color:#800080">`</span><span style="color:#800080">$</span><span style="color:#000">É</span><span style="color:#800080">w</span><span style="color:#800080">0</span><span style="color:#800080">.</span><span style="color:#000">É</span><span style="color:#800080">w</span></div>
</div>
<div class="sb" style="left:995px;top:753px;width:17px;height:209px"></div>
<div class="th" style="left:997px;top:769px;width:13px;height:19px"></div>
<div class="sb" style="left:1px;top:962px;width:1011px;height:17px"></div>
<div class="th" style="left:18px;top:964px;width:750px;height:13px"></div>
<div class="a" style="left:1014px;top:724px;width:905px;height:256px;background:#fff8f0;border-left:1px solid #828790;border-top:1px solid #828790;border-bottom:1px solid #828790"></div>
<div class="a" style="left:1015px;top:725px;width:888px;height:237px;overflow:hidden">
<div class="a" style="left:0;top:0;width:218px;height:13px;background:#000"></div>
<div class="a" style="left:219px;top:0;width:669px;height:13px;background:#c0c0c0"></div>
<div class="a" style="left:218px;top:0;width:1px;height:237px;background:#808080"></div>
<div class="a" style="left:368px;top:0;width:1px;height:237px;background:#808080"></div>
<div class="m m13" style="left:4px;top:0px;color:#fff;width:214px;overflow:hidden">0019FF20 &lt;&amp;char * buf&gt;</div>
<div class="m m13" style="left:223px;top:0px;color:#000">00403370</div>
<div class="m m13" style="left:373px;top:0px;color:#000">"234"</div>
<div class="m m13" style="left:4px;top:13px;color:#808080;width:214px;overflow:hidden">0019FF24</div>
<div class="m m13" style="left:223px;top:13px;color:#000">00402104</div>
<div class="m m13" style="left:373px;top:13px;color:#000">"123"</div>
<div class="m m13" style="left:4px;top:26px;color:#808080;width:214px;overflow:hidden">0019FF28</div>
<div class="m m13" style="left:223px;top:26px;color:#000">0019FF70</div>
<div class="m m13" style="left:4px;top:39px;color:#808080;width:214px;overflow:hidden">0019FF2C</div>
<div class="m m13" style="left:226px;top:39px;color:#000">00401387</div>
<div class="m m13" style="left:373px;top:39px;color:#ff0000">返回到 vm test.vmp.__scrt_common_main_seh+FA 自 vm test.vmp._main</div>
<div class="m m13" style="left:4px;top:52px;color:#808080;width:214px;overflow:hidden">0019FF30</div>
<div class="m m13" style="left:226px;top:52px;color:#000">00000001</div>
<div class="m m13" style="left:4px;top:65px;color:#808080;width:214px;overflow:hidden">0019FF34</div>
<div class="m m13" style="left:226px;top:65px;color:#000">007F57A0</div>
<div class="m m13" style="left:373px;top:65px;color:#000">&amp;"C:\\Users\\sangfor\\Desktop\\vmptest\\vm test.vmp.exe"</div>
<div class="m m13" style="left:4px;top:78px;color:#808080;width:214px;overflow:hidden">0019FF38</div>
<div class="m m13" style="left:226px;top:78px;color:#000">007FA2A8</div>
<div class="m m13" style="left:373px;top:78px;color:#000">&amp;"ALLUSERSPROFILE=C:\\ProgramData"</div>
<div class="m m13" style="left:4px;top:91px;color:#808080;width:214px;overflow:hidden">0019FF3C</div>
<div class="m m13" style="left:226px;top:91px;color:#000">09105F67</div>
<div class="m m13" style="left:4px;top:104px;color:#ff0000;width:214px;overflow:hidden">0019FF40 &lt;&amp;_mainCRTStartup&gt;</div>
<div class="m m13" style="left:226px;top:104px;color:#000">0040140F</div>
<div class="m m13" style="left:373px;top:104px;color:#000">vm test.vmp._mainCRTStartup</div>
<div class="m m13" style="left:4px;top:117px;color:#ff0000;width:214px;overflow:hidden">0019FF44 &lt;&amp;_mainCRTStartup&gt;</div>
<div class="m m13" style="left:226px;top:117px;color:#000">0040140F</div>
<div class="m m13" style="left:373px;top:117px;color:#000">vm test.vmp._mainCRTStartup</div>
<div class="m m13" style="left:4px;top:130px;color:#808080;width:214px;overflow:hidden">0019FF48</div>
<div class="m m13" style="left:226px;top:130px;color:#000">002DD000</div>
<div class="m m13" style="left:4px;top:143px;color:#808080;width:214px;overflow:hidden">0019FF4C</div>
<div class="m m13" style="left:226px;top:143px;color:#000">00000000</div>
<div class="m m13" style="left:4px;top:156px;color:#808080;width:214px;overflow:hidden">0019FF50</div>
<div class="m m13" style="left:226px;top:156px;color:#000">00000000</div>
<div class="m m13" style="left:4px;top:169px;color:#808080;width:214px;overflow:hidden">0019FF54</div>
<div class="m m13" style="left:226px;top:169px;color:#000">00000000</div>
<div class="m m13" style="left:4px;top:182px;color:#808080;width:214px;overflow:hidden">0019FF58</div>
<div class="m m13" style="left:226px;top:182px;color:#000">0019FF3C</div>
<div class="m m13" style="left:4px;top:195px;color:#808080;width:214px;overflow:hidden">0019FF5C</div>
<div class="m m13" style="left:226px;top:195px;color:#000">00000000</div>
<div class="m m13" style="left:4px;top:208px;color:#808080;width:214px;overflow:hidden">0019FF60</div>
<div class="m m13" style="left:226px;top:208px;color:#000">0019FFCC</div>
<div class="m m13" style="left:373px;top:208px;color:#a070ff">指向SEH_Record[1]的指针</div>
<div class="m m13" style="left:4px;top:221px;color:#ff0000;width:214px;overflow:hidden">0019FF64 &lt;&amp;__except_handler</div>
<div class="m m13" style="left:226px;top:221px;color:#000">00401B18</div>
<div class="m m13" style="left:373px;top:221px;color:#000">vm test.vmp.__except_handler4</div>
<div class="m m13" style="left:4px;top:234px;color:#808080;width:214px;overflow:hidden">0019FF68</div>
<div class="m m13" style="left:226px;top:234px;color:#000">00402557</div>
<div class="a" style="left:220px;top:42px;width:2px;height:200px;background:#000"></div>
<div class="a" style="left:220px;top:42px;width:5px;height:2px;background:#000"></div>
</div>
<div class="sb" style="left:1903px;top:725px;width:16px;height:237px"></div>
<div class="th" style="left:1905px;top:926px;width:12px;height:17px"></div>
<div class="sb" style="left:1015px;top:962px;width:904px;height:17px"></div>
<div class="th" style="left:1032px;top:964px;width:260px;height:13px"></div>
<div class="a" style="left:0;top:980px;width:1920px;height:30px;background:#f0f0f0"></div>
<div class="ui" style="left:2px;top:984px;font-size:16px;line-height:20px">命令<span style="font-size:12px;margin-left:1px">:</span></div>
<div class="a" style="left:40px;top:984px;width:1805px;height:21px;background:#fff;border:1px solid #7a7a7a"></div>
<div class="a" style="left:1845px;top:983px;width:73px;height:25px;background:#e1e1e1;border:1px solid #adadad"></div>
<div class="ui" style="left:1848px;top:986px;font-size:15px;line-height:19px">默认</div>
<svg class="a" style="left:1904px;top:993px" width="10" height="6"><path d="M0 0 H9 L4.5 5z" fill="#000"/></svg>
<div class="a" style="left:0;top:1010px;width:1920px;height:30px;background:#c0c0c0;border-top:1px solid #a8a8a8"></div>
<div class="a" style="left:2px;top:1013px;width:74px;height:25px;background:#ffff00;border-top:1px solid #909000;border-left:1px solid #909000"></div>
<div class="ui" style="left:16px;top:1015px;font-size:16px;line-height:20px;color:#ff0000">已暂停</div>
<div class="a" style="left:82px;top:1013px;width:1683px;height:24px;border-top:1px solid #808080;border-left:1px solid #808080;border-right:1px solid #e0e0e0;border-bottom:1px solid #e0e0e0"></div>
<div class="ui" style="left:86px;top:1016px;font-size:15px;line-height:19px"><span style="display:inline-block;transform:scaleX(0.62);transform-origin:0 50%;margin-right:-12px">INT3</span> 断点于 <span style="display:inline-block;transform:scaleX(0.69);transform-origin:0 50%;margin-right:-100px">vm test.vmp.00433E36 (00433E36)!</span></div>
<div class="a" style="left:1771px;top:1013px;width:147px;height:24px;border-top:1px solid #808080;border-left:1px solid #808080;border-right:1px solid #e0e0e0;border-bottom:1px solid #e0e0e0"></div>
<div class="ui" style="left:1776px;top:1016px;font-size:15px;line-height:19px">已调试时间：</div>
<div class="ui" style="left:1874px;top:1016px;font-size:15px;line-height:19px;transform:scaleX(0.6);transform-origin:0 0">0:16:41:21</div>
<div class="a" style="left:0;top:1040px;width:1920px;height:8px;background:#1b2a30"></div>
<div class="a" style="left:48px;top:1040px;width:344px;height:8px;background:#f0f0f0"></div>
<div class="a" style="left:1226px;top:1040px;width:48px;height:8px;background:#3a474c"></div>
<div class="a" style="left:1915px;top:1040px;width:1px;height:8px;background:#8a9498"></div>
<div class="ui" style="left:1815px;top:1043px;font-size:12px;line-height:14px;color:#fff">10:43</div>
<svg class="a" style="left:0;top:0" width="1920" height="1048"><path d="M661.5 138.0 L664.5 135.0 L667.5 138.0 M661.5 278.0 L664.5 281.0 L667.5 278.0 M661.5 320.0 L664.5 317.0 L667.5 320.0 M661.5 489.0 L664.5 486.0 L667.5 489.0 M661.5 538.0 L664.5 541.0 L667.5 538.0 M661.5 567.0 L664.5 564.0 L667.5 567.0 M661.5 645.0 L664.5 642.0 L667.5 645.0" fill="none" stroke="#e82020" stroke-width="1.3"/></svg>
<svg class="a" style="left:0;top:0" width="1920" height="1048"><path d="M621 135 L635.7 146 L633 148.7 L654 194 L626 152.4 L622 154.2 Z" fill="#ff3c3c"/></svg>
<svg class="a" style="left:0;top:0;pointer-events:none" width="1920" height="1048"><path d="M1362.5 113 L1366.5 109 L1370.5 113 M1362.5 636 L1366.5 640 L1370.5 636 M198 650.5 L194 654.5 L198 658.5 M1347 650.5 L1351 654.5 L1347 658.5 M1907 136 L1911 132 L1915 136 M1907 600 L1911 604 L1915 600 M1387 613 L1383 617 L1387 621 M1893 613 L1897 617 L1893 621 M1906.5 663 L1910.5 659 L1914.5 663 M1906.5 712 L1910.5 716 L1914.5 712 M999.5 764 L1003.5 760 L1007.5 764 M999.5 951 L1003.5 955 L1007.5 951 M11 966 L7 970 L11 974 M984 966 L988 970 L984 974 M1907 736 L1911 732 L1915 736 M1907 951 L1911 955 L1915 951 M1024 966 L1020 970 L1024 974 M1892 966 L1896 970 L1892 974" fill="none" stroke="#606060" stroke-width="2"/></svg>
</body></html>
